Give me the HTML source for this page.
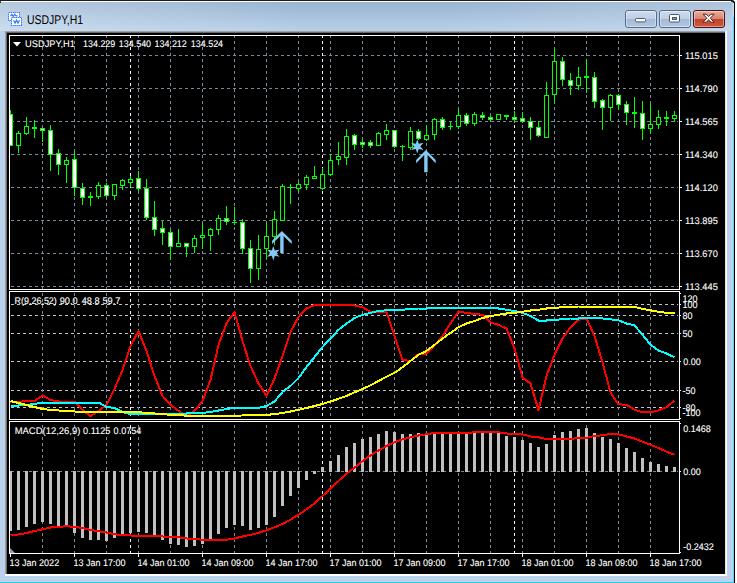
<!DOCTYPE html>
<html><head><meta charset="utf-8"><title>USDJPY,H1</title>
<style>html,body{margin:0;padding:0;background:#fff;overflow:hidden}svg{display:block}text{font-family:"Liberation Sans",sans-serif;shape-rendering:auto;text-rendering:geometricPrecision}</style>
</head><body>
<svg width="737" height="583" viewBox="0 0 737 583" font-family="'Liberation Sans', sans-serif" shape-rendering="crispEdges">
<defs><linearGradient id="tg" x1="0" y1="0" x2="0" y2="1"><stop offset="0" stop-color="#99b4d1"/><stop offset="1" stop-color="#b9d1ea"/></linearGradient><linearGradient id="bt" x1="0" y1="0" x2="0" y2="1"><stop offset="0" stop-color="#cfdcee"/><stop offset="0.48" stop-color="#bccfe6"/><stop offset="0.5" stop-color="#a2b9d6"/><stop offset="1" stop-color="#b3c8e2"/></linearGradient><linearGradient id="bc" x1="0" y1="0" x2="0" y2="1"><stop offset="0" stop-color="#eeb0a0"/><stop offset="0.48" stop-color="#d98370"/><stop offset="0.5" stop-color="#c2412a"/><stop offset="1" stop-color="#cf5a3c"/></linearGradient><linearGradient id="hg" x1="0" y1="0" x2="1" y2="0"><stop offset="0" stop-color="#fff" stop-opacity="0.28"/><stop offset="0.42" stop-color="#fff" stop-opacity="0"/><stop offset="0.6" stop-color="#fff" stop-opacity="0"/><stop offset="1" stop-color="#fff" stop-opacity="0.2"/></linearGradient></defs>
<rect x="0" y="0" width="737" height="583" fill="#ffffff"/>
<rect x="0" y="0" width="735" height="583" fill="#b9d1ea"/>
<rect x="0" y="2" width="734" height="30" fill="url(#tg)"/>
<rect x="0" y="2" width="732" height="29" fill="url(#hg)"/>
<rect x="0" y="0" width="733" height="1" fill="#1c1c1c"/>
<rect x="733" y="0" width="4" height="2" fill="#ffffff"/>
<rect x="733" y="0" width="1" height="1" fill="#777777"/>
<rect x="0" y="1" width="731" height="1" fill="#ffffff"/>
<rect x="731" y="1" width="2" height="1" fill="#1d3a44"/>
<rect x="733" y="1" width="1" height="1" fill="#000000"/>
<rect x="734" y="1" width="1" height="1" fill="#888888"/>
<rect x="732" y="3" width="1" height="579" fill="#c5cfe8"/>
<rect x="0" y="581" width="733" height="1" fill="#c5cfe8"/>
<rect x="733" y="3" width="1" height="580" fill="#55d5fb"/>
<rect x="733" y="3" width="1" height="14" fill="#a8e6fb"/>
<rect x="733" y="2" width="1" height="1" fill="#1d3a44"/>
<rect x="734" y="2" width="1" height="581" fill="#000000"/>
<rect x="0" y="582" width="734" height="1" fill="#22cfe8"/>
<rect x="0" y="1" width="1" height="2" fill="#3a3a3a"/>
<rect x="5" y="31" width="722" height="545" fill="#ffffff"/>
<rect x="5" y="31" width="721" height="544" fill="#a0a0a0"/>
<rect x="6" y="32" width="720" height="543" fill="#696969"/>
<rect x="7" y="33" width="718" height="541" fill="#000000"/>
<rect x="725" y="31" width="1" height="545" fill="#e3e3e3"/>
<rect x="726" y="31" width="1" height="545" fill="#ffffff"/>
<rect x="5" y="574" width="722" height="2" fill="#ffffff"/>
<g shape-rendering="crispEdges" fill="#ffffff">
<rect x="8.5" y="12.5" width="11" height="8" stroke="#8db6ff"/>
<rect x="8.5" y="12.5" width="11" height="8" fill="none" stroke="#3f7df7" stroke-dasharray="1 1"/>
<path d="M10.5 16l1.3-1.6l1.4 2l1.5-2.2l1.3 1.6h1.6" stroke="#3575f2" fill="none" shape-rendering="auto" stroke-width="1.2"/>
<rect x="11.5" y="17.5" width="10" height="8" stroke="#8db6ff"/>
<rect x="11.5" y="17.5" width="10" height="8" fill="none" stroke="#3f7df7" stroke-dasharray="1 1"/>
<path d="M13.6 20.2l1.4 3l1.5-3l1.5 3l1.5-3" stroke="#3575f2" fill="none" shape-rendering="auto" stroke-width="1.2"/>
</g>
<text x="27" y="24" font-size="12.8" fill="#000" textLength="56" lengthAdjust="spacingAndGlyphs" shape-rendering="auto">USDJPY,H1</text>
<rect x="625.5" y="10.5" width="31" height="17" rx="2.5" ry="2.5" fill="url(#bt)" stroke="#566c8a" shape-rendering="auto"/>
<rect x="626.5" y="11.5" width="29" height="15" rx="1.5" ry="1.5" fill="none" stroke="#ffffff" stroke-opacity="0.4" shape-rendering="auto"/>
<rect x="659.5" y="10.5" width="31" height="17" rx="2.5" ry="2.5" fill="url(#bt)" stroke="#566c8a" shape-rendering="auto"/>
<rect x="660.5" y="11.5" width="29" height="15" rx="1.5" ry="1.5" fill="none" stroke="#ffffff" stroke-opacity="0.4" shape-rendering="auto"/>
<rect x="693.5" y="10.5" width="31" height="17" rx="2.5" ry="2.5" fill="url(#bc)" stroke="#431320" shape-rendering="auto"/>
<rect x="694.5" y="11.5" width="29" height="15" rx="1.5" ry="1.5" fill="none" stroke="#ffffff" stroke-opacity="0.4" shape-rendering="auto"/>
<rect x="635.5" y="18.5" width="10" height="3.4" rx="1" fill="#fff" stroke="#4a5872" shape-rendering="auto"/>
<rect x="669.5" y="14.5" width="10" height="7.5" rx="1" fill="#fff" stroke="#4a5872" shape-rendering="auto"/>
<rect x="672.5" y="17.5" width="4" height="2" fill="#7f9cc4" stroke="#4a5872" shape-rendering="auto"/>
<polygon points="703.0,14.2 706.2,14.2 708.6,16.5 711.0,14.2 714.2,14.2 710.3,18.2 714.2,22.2 711.0,22.2 708.6,19.9 706.2,22.2 703.0,22.2 706.9,18.2" fill="#fff" stroke="#4d2323" stroke-width="1" stroke-linejoin="round" shape-rendering="auto"/>
<path d="M11 55h3v1h-3zM17 55h3v1h-3zM23 55h3v1h-3zM29 55h3v1h-3zM35 55h3v1h-3zM41 55h3v1h-3zM47 55h3v1h-3zM53 55h3v1h-3zM59 55h3v1h-3zM65 55h3v1h-3zM71 55h3v1h-3zM77 55h3v1h-3zM83 55h3v1h-3zM89 55h3v1h-3zM95 55h3v1h-3zM101 55h3v1h-3zM107 55h3v1h-3zM113 55h3v1h-3zM119 55h3v1h-3zM125 55h3v1h-3zM131 55h3v1h-3zM137 55h3v1h-3zM143 55h3v1h-3zM149 55h3v1h-3zM155 55h3v1h-3zM161 55h3v1h-3zM167 55h3v1h-3zM173 55h3v1h-3zM179 55h3v1h-3zM185 55h3v1h-3zM191 55h3v1h-3zM197 55h3v1h-3zM203 55h3v1h-3zM209 55h3v1h-3zM215 55h3v1h-3zM221 55h3v1h-3zM227 55h3v1h-3zM233 55h3v1h-3zM239 55h3v1h-3zM245 55h3v1h-3zM251 55h3v1h-3zM257 55h3v1h-3zM263 55h3v1h-3zM269 55h3v1h-3zM275 55h3v1h-3zM281 55h3v1h-3zM287 55h3v1h-3zM293 55h3v1h-3zM299 55h3v1h-3zM305 55h3v1h-3zM311 55h3v1h-3zM317 55h3v1h-3zM323 55h3v1h-3zM329 55h3v1h-3zM335 55h3v1h-3zM341 55h3v1h-3zM347 55h3v1h-3zM353 55h3v1h-3zM359 55h3v1h-3zM365 55h3v1h-3zM371 55h3v1h-3zM377 55h3v1h-3zM383 55h3v1h-3zM389 55h3v1h-3zM395 55h3v1h-3zM401 55h3v1h-3zM407 55h3v1h-3zM413 55h3v1h-3zM419 55h3v1h-3zM425 55h3v1h-3zM431 55h3v1h-3zM437 55h3v1h-3zM443 55h3v1h-3zM449 55h3v1h-3zM455 55h3v1h-3zM461 55h3v1h-3zM467 55h3v1h-3zM473 55h3v1h-3zM479 55h3v1h-3zM485 55h3v1h-3zM491 55h3v1h-3zM497 55h3v1h-3zM503 55h3v1h-3zM509 55h3v1h-3zM515 55h3v1h-3zM521 55h3v1h-3zM527 55h3v1h-3zM533 55h3v1h-3zM539 55h3v1h-3zM545 55h3v1h-3zM551 55h3v1h-3zM557 55h3v1h-3zM563 55h3v1h-3zM569 55h3v1h-3zM575 55h3v1h-3zM581 55h3v1h-3zM587 55h3v1h-3zM593 55h3v1h-3zM599 55h3v1h-3zM605 55h3v1h-3zM611 55h3v1h-3zM617 55h3v1h-3zM623 55h3v1h-3zM629 55h3v1h-3zM635 55h3v1h-3zM641 55h3v1h-3zM647 55h3v1h-3zM653 55h3v1h-3zM659 55h3v1h-3zM665 55h3v1h-3zM671 55h3v1h-3zM677 55h1v1h-1z" fill="#778899"/>
<path d="M11 88h3v1h-3zM17 88h3v1h-3zM23 88h3v1h-3zM29 88h3v1h-3zM35 88h3v1h-3zM41 88h3v1h-3zM47 88h3v1h-3zM53 88h3v1h-3zM59 88h3v1h-3zM65 88h3v1h-3zM71 88h3v1h-3zM77 88h3v1h-3zM83 88h3v1h-3zM89 88h3v1h-3zM95 88h3v1h-3zM101 88h3v1h-3zM107 88h3v1h-3zM113 88h3v1h-3zM119 88h3v1h-3zM125 88h3v1h-3zM131 88h3v1h-3zM137 88h3v1h-3zM143 88h3v1h-3zM149 88h3v1h-3zM155 88h3v1h-3zM161 88h3v1h-3zM167 88h3v1h-3zM173 88h3v1h-3zM179 88h3v1h-3zM185 88h3v1h-3zM191 88h3v1h-3zM197 88h3v1h-3zM203 88h3v1h-3zM209 88h3v1h-3zM215 88h3v1h-3zM221 88h3v1h-3zM227 88h3v1h-3zM233 88h3v1h-3zM239 88h3v1h-3zM245 88h3v1h-3zM251 88h3v1h-3zM257 88h3v1h-3zM263 88h3v1h-3zM269 88h3v1h-3zM275 88h3v1h-3zM281 88h3v1h-3zM287 88h3v1h-3zM293 88h3v1h-3zM299 88h3v1h-3zM305 88h3v1h-3zM311 88h3v1h-3zM317 88h3v1h-3zM323 88h3v1h-3zM329 88h3v1h-3zM335 88h3v1h-3zM341 88h3v1h-3zM347 88h3v1h-3zM353 88h3v1h-3zM359 88h3v1h-3zM365 88h3v1h-3zM371 88h3v1h-3zM377 88h3v1h-3zM383 88h3v1h-3zM389 88h3v1h-3zM395 88h3v1h-3zM401 88h3v1h-3zM407 88h3v1h-3zM413 88h3v1h-3zM419 88h3v1h-3zM425 88h3v1h-3zM431 88h3v1h-3zM437 88h3v1h-3zM443 88h3v1h-3zM449 88h3v1h-3zM455 88h3v1h-3zM461 88h3v1h-3zM467 88h3v1h-3zM473 88h3v1h-3zM479 88h3v1h-3zM485 88h3v1h-3zM491 88h3v1h-3zM497 88h3v1h-3zM503 88h3v1h-3zM509 88h3v1h-3zM515 88h3v1h-3zM521 88h3v1h-3zM527 88h3v1h-3zM533 88h3v1h-3zM539 88h3v1h-3zM545 88h3v1h-3zM551 88h3v1h-3zM557 88h3v1h-3zM563 88h3v1h-3zM569 88h3v1h-3zM575 88h3v1h-3zM581 88h3v1h-3zM587 88h3v1h-3zM593 88h3v1h-3zM599 88h3v1h-3zM605 88h3v1h-3zM611 88h3v1h-3zM617 88h3v1h-3zM623 88h3v1h-3zM629 88h3v1h-3zM635 88h3v1h-3zM641 88h3v1h-3zM647 88h3v1h-3zM653 88h3v1h-3zM659 88h3v1h-3zM665 88h3v1h-3zM671 88h3v1h-3zM677 88h1v1h-1z" fill="#778899"/>
<path d="M11 121h3v1h-3zM17 121h3v1h-3zM23 121h3v1h-3zM29 121h3v1h-3zM35 121h3v1h-3zM41 121h3v1h-3zM47 121h3v1h-3zM53 121h3v1h-3zM59 121h3v1h-3zM65 121h3v1h-3zM71 121h3v1h-3zM77 121h3v1h-3zM83 121h3v1h-3zM89 121h3v1h-3zM95 121h3v1h-3zM101 121h3v1h-3zM107 121h3v1h-3zM113 121h3v1h-3zM119 121h3v1h-3zM125 121h3v1h-3zM131 121h3v1h-3zM137 121h3v1h-3zM143 121h3v1h-3zM149 121h3v1h-3zM155 121h3v1h-3zM161 121h3v1h-3zM167 121h3v1h-3zM173 121h3v1h-3zM179 121h3v1h-3zM185 121h3v1h-3zM191 121h3v1h-3zM197 121h3v1h-3zM203 121h3v1h-3zM209 121h3v1h-3zM215 121h3v1h-3zM221 121h3v1h-3zM227 121h3v1h-3zM233 121h3v1h-3zM239 121h3v1h-3zM245 121h3v1h-3zM251 121h3v1h-3zM257 121h3v1h-3zM263 121h3v1h-3zM269 121h3v1h-3zM275 121h3v1h-3zM281 121h3v1h-3zM287 121h3v1h-3zM293 121h3v1h-3zM299 121h3v1h-3zM305 121h3v1h-3zM311 121h3v1h-3zM317 121h3v1h-3zM323 121h3v1h-3zM329 121h3v1h-3zM335 121h3v1h-3zM341 121h3v1h-3zM347 121h3v1h-3zM353 121h3v1h-3zM359 121h3v1h-3zM365 121h3v1h-3zM371 121h3v1h-3zM377 121h3v1h-3zM383 121h3v1h-3zM389 121h3v1h-3zM395 121h3v1h-3zM401 121h3v1h-3zM407 121h3v1h-3zM413 121h3v1h-3zM419 121h3v1h-3zM425 121h3v1h-3zM431 121h3v1h-3zM437 121h3v1h-3zM443 121h3v1h-3zM449 121h3v1h-3zM455 121h3v1h-3zM461 121h3v1h-3zM467 121h3v1h-3zM473 121h3v1h-3zM479 121h3v1h-3zM485 121h3v1h-3zM491 121h3v1h-3zM497 121h3v1h-3zM503 121h3v1h-3zM509 121h3v1h-3zM515 121h3v1h-3zM521 121h3v1h-3zM527 121h3v1h-3zM533 121h3v1h-3zM539 121h3v1h-3zM545 121h3v1h-3zM551 121h3v1h-3zM557 121h3v1h-3zM563 121h3v1h-3zM569 121h3v1h-3zM575 121h3v1h-3zM581 121h3v1h-3zM587 121h3v1h-3zM593 121h3v1h-3zM599 121h3v1h-3zM605 121h3v1h-3zM611 121h3v1h-3zM617 121h3v1h-3zM623 121h3v1h-3zM629 121h3v1h-3zM635 121h3v1h-3zM641 121h3v1h-3zM647 121h3v1h-3zM653 121h3v1h-3zM659 121h3v1h-3zM665 121h3v1h-3zM671 121h3v1h-3zM677 121h1v1h-1z" fill="#778899"/>
<path d="M11 154h3v1h-3zM17 154h3v1h-3zM23 154h3v1h-3zM29 154h3v1h-3zM35 154h3v1h-3zM41 154h3v1h-3zM47 154h3v1h-3zM53 154h3v1h-3zM59 154h3v1h-3zM65 154h3v1h-3zM71 154h3v1h-3zM77 154h3v1h-3zM83 154h3v1h-3zM89 154h3v1h-3zM95 154h3v1h-3zM101 154h3v1h-3zM107 154h3v1h-3zM113 154h3v1h-3zM119 154h3v1h-3zM125 154h3v1h-3zM131 154h3v1h-3zM137 154h3v1h-3zM143 154h3v1h-3zM149 154h3v1h-3zM155 154h3v1h-3zM161 154h3v1h-3zM167 154h3v1h-3zM173 154h3v1h-3zM179 154h3v1h-3zM185 154h3v1h-3zM191 154h3v1h-3zM197 154h3v1h-3zM203 154h3v1h-3zM209 154h3v1h-3zM215 154h3v1h-3zM221 154h3v1h-3zM227 154h3v1h-3zM233 154h3v1h-3zM239 154h3v1h-3zM245 154h3v1h-3zM251 154h3v1h-3zM257 154h3v1h-3zM263 154h3v1h-3zM269 154h3v1h-3zM275 154h3v1h-3zM281 154h3v1h-3zM287 154h3v1h-3zM293 154h3v1h-3zM299 154h3v1h-3zM305 154h3v1h-3zM311 154h3v1h-3zM317 154h3v1h-3zM323 154h3v1h-3zM329 154h3v1h-3zM335 154h3v1h-3zM341 154h3v1h-3zM347 154h3v1h-3zM353 154h3v1h-3zM359 154h3v1h-3zM365 154h3v1h-3zM371 154h3v1h-3zM377 154h3v1h-3zM383 154h3v1h-3zM389 154h3v1h-3zM395 154h3v1h-3zM401 154h3v1h-3zM407 154h3v1h-3zM413 154h3v1h-3zM419 154h3v1h-3zM425 154h3v1h-3zM431 154h3v1h-3zM437 154h3v1h-3zM443 154h3v1h-3zM449 154h3v1h-3zM455 154h3v1h-3zM461 154h3v1h-3zM467 154h3v1h-3zM473 154h3v1h-3zM479 154h3v1h-3zM485 154h3v1h-3zM491 154h3v1h-3zM497 154h3v1h-3zM503 154h3v1h-3zM509 154h3v1h-3zM515 154h3v1h-3zM521 154h3v1h-3zM527 154h3v1h-3zM533 154h3v1h-3zM539 154h3v1h-3zM545 154h3v1h-3zM551 154h3v1h-3zM557 154h3v1h-3zM563 154h3v1h-3zM569 154h3v1h-3zM575 154h3v1h-3zM581 154h3v1h-3zM587 154h3v1h-3zM593 154h3v1h-3zM599 154h3v1h-3zM605 154h3v1h-3zM611 154h3v1h-3zM617 154h3v1h-3zM623 154h3v1h-3zM629 154h3v1h-3zM635 154h3v1h-3zM641 154h3v1h-3zM647 154h3v1h-3zM653 154h3v1h-3zM659 154h3v1h-3zM665 154h3v1h-3zM671 154h3v1h-3zM677 154h1v1h-1z" fill="#778899"/>
<path d="M11 187h3v1h-3zM17 187h3v1h-3zM23 187h3v1h-3zM29 187h3v1h-3zM35 187h3v1h-3zM41 187h3v1h-3zM47 187h3v1h-3zM53 187h3v1h-3zM59 187h3v1h-3zM65 187h3v1h-3zM71 187h3v1h-3zM77 187h3v1h-3zM83 187h3v1h-3zM89 187h3v1h-3zM95 187h3v1h-3zM101 187h3v1h-3zM107 187h3v1h-3zM113 187h3v1h-3zM119 187h3v1h-3zM125 187h3v1h-3zM131 187h3v1h-3zM137 187h3v1h-3zM143 187h3v1h-3zM149 187h3v1h-3zM155 187h3v1h-3zM161 187h3v1h-3zM167 187h3v1h-3zM173 187h3v1h-3zM179 187h3v1h-3zM185 187h3v1h-3zM191 187h3v1h-3zM197 187h3v1h-3zM203 187h3v1h-3zM209 187h3v1h-3zM215 187h3v1h-3zM221 187h3v1h-3zM227 187h3v1h-3zM233 187h3v1h-3zM239 187h3v1h-3zM245 187h3v1h-3zM251 187h3v1h-3zM257 187h3v1h-3zM263 187h3v1h-3zM269 187h3v1h-3zM275 187h3v1h-3zM281 187h3v1h-3zM287 187h3v1h-3zM293 187h3v1h-3zM299 187h3v1h-3zM305 187h3v1h-3zM311 187h3v1h-3zM317 187h3v1h-3zM323 187h3v1h-3zM329 187h3v1h-3zM335 187h3v1h-3zM341 187h3v1h-3zM347 187h3v1h-3zM353 187h3v1h-3zM359 187h3v1h-3zM365 187h3v1h-3zM371 187h3v1h-3zM377 187h3v1h-3zM383 187h3v1h-3zM389 187h3v1h-3zM395 187h3v1h-3zM401 187h3v1h-3zM407 187h3v1h-3zM413 187h3v1h-3zM419 187h3v1h-3zM425 187h3v1h-3zM431 187h3v1h-3zM437 187h3v1h-3zM443 187h3v1h-3zM449 187h3v1h-3zM455 187h3v1h-3zM461 187h3v1h-3zM467 187h3v1h-3zM473 187h3v1h-3zM479 187h3v1h-3zM485 187h3v1h-3zM491 187h3v1h-3zM497 187h3v1h-3zM503 187h3v1h-3zM509 187h3v1h-3zM515 187h3v1h-3zM521 187h3v1h-3zM527 187h3v1h-3zM533 187h3v1h-3zM539 187h3v1h-3zM545 187h3v1h-3zM551 187h3v1h-3zM557 187h3v1h-3zM563 187h3v1h-3zM569 187h3v1h-3zM575 187h3v1h-3zM581 187h3v1h-3zM587 187h3v1h-3zM593 187h3v1h-3zM599 187h3v1h-3zM605 187h3v1h-3zM611 187h3v1h-3zM617 187h3v1h-3zM623 187h3v1h-3zM629 187h3v1h-3zM635 187h3v1h-3zM641 187h3v1h-3zM647 187h3v1h-3zM653 187h3v1h-3zM659 187h3v1h-3zM665 187h3v1h-3zM671 187h3v1h-3zM677 187h1v1h-1z" fill="#778899"/>
<path d="M11 220h3v1h-3zM17 220h3v1h-3zM23 220h3v1h-3zM29 220h3v1h-3zM35 220h3v1h-3zM41 220h3v1h-3zM47 220h3v1h-3zM53 220h3v1h-3zM59 220h3v1h-3zM65 220h3v1h-3zM71 220h3v1h-3zM77 220h3v1h-3zM83 220h3v1h-3zM89 220h3v1h-3zM95 220h3v1h-3zM101 220h3v1h-3zM107 220h3v1h-3zM113 220h3v1h-3zM119 220h3v1h-3zM125 220h3v1h-3zM131 220h3v1h-3zM137 220h3v1h-3zM143 220h3v1h-3zM149 220h3v1h-3zM155 220h3v1h-3zM161 220h3v1h-3zM167 220h3v1h-3zM173 220h3v1h-3zM179 220h3v1h-3zM185 220h3v1h-3zM191 220h3v1h-3zM197 220h3v1h-3zM203 220h3v1h-3zM209 220h3v1h-3zM215 220h3v1h-3zM221 220h3v1h-3zM227 220h3v1h-3zM233 220h3v1h-3zM239 220h3v1h-3zM245 220h3v1h-3zM251 220h3v1h-3zM257 220h3v1h-3zM263 220h3v1h-3zM269 220h3v1h-3zM275 220h3v1h-3zM281 220h3v1h-3zM287 220h3v1h-3zM293 220h3v1h-3zM299 220h3v1h-3zM305 220h3v1h-3zM311 220h3v1h-3zM317 220h3v1h-3zM323 220h3v1h-3zM329 220h3v1h-3zM335 220h3v1h-3zM341 220h3v1h-3zM347 220h3v1h-3zM353 220h3v1h-3zM359 220h3v1h-3zM365 220h3v1h-3zM371 220h3v1h-3zM377 220h3v1h-3zM383 220h3v1h-3zM389 220h3v1h-3zM395 220h3v1h-3zM401 220h3v1h-3zM407 220h3v1h-3zM413 220h3v1h-3zM419 220h3v1h-3zM425 220h3v1h-3zM431 220h3v1h-3zM437 220h3v1h-3zM443 220h3v1h-3zM449 220h3v1h-3zM455 220h3v1h-3zM461 220h3v1h-3zM467 220h3v1h-3zM473 220h3v1h-3zM479 220h3v1h-3zM485 220h3v1h-3zM491 220h3v1h-3zM497 220h3v1h-3zM503 220h3v1h-3zM509 220h3v1h-3zM515 220h3v1h-3zM521 220h3v1h-3zM527 220h3v1h-3zM533 220h3v1h-3zM539 220h3v1h-3zM545 220h3v1h-3zM551 220h3v1h-3zM557 220h3v1h-3zM563 220h3v1h-3zM569 220h3v1h-3zM575 220h3v1h-3zM581 220h3v1h-3zM587 220h3v1h-3zM593 220h3v1h-3zM599 220h3v1h-3zM605 220h3v1h-3zM611 220h3v1h-3zM617 220h3v1h-3zM623 220h3v1h-3zM629 220h3v1h-3zM635 220h3v1h-3zM641 220h3v1h-3zM647 220h3v1h-3zM653 220h3v1h-3zM659 220h3v1h-3zM665 220h3v1h-3zM671 220h3v1h-3zM677 220h1v1h-1z" fill="#778899"/>
<path d="M11 253h3v1h-3zM17 253h3v1h-3zM23 253h3v1h-3zM29 253h3v1h-3zM35 253h3v1h-3zM41 253h3v1h-3zM47 253h3v1h-3zM53 253h3v1h-3zM59 253h3v1h-3zM65 253h3v1h-3zM71 253h3v1h-3zM77 253h3v1h-3zM83 253h3v1h-3zM89 253h3v1h-3zM95 253h3v1h-3zM101 253h3v1h-3zM107 253h3v1h-3zM113 253h3v1h-3zM119 253h3v1h-3zM125 253h3v1h-3zM131 253h3v1h-3zM137 253h3v1h-3zM143 253h3v1h-3zM149 253h3v1h-3zM155 253h3v1h-3zM161 253h3v1h-3zM167 253h3v1h-3zM173 253h3v1h-3zM179 253h3v1h-3zM185 253h3v1h-3zM191 253h3v1h-3zM197 253h3v1h-3zM203 253h3v1h-3zM209 253h3v1h-3zM215 253h3v1h-3zM221 253h3v1h-3zM227 253h3v1h-3zM233 253h3v1h-3zM239 253h3v1h-3zM245 253h3v1h-3zM251 253h3v1h-3zM257 253h3v1h-3zM263 253h3v1h-3zM269 253h3v1h-3zM275 253h3v1h-3zM281 253h3v1h-3zM287 253h3v1h-3zM293 253h3v1h-3zM299 253h3v1h-3zM305 253h3v1h-3zM311 253h3v1h-3zM317 253h3v1h-3zM323 253h3v1h-3zM329 253h3v1h-3zM335 253h3v1h-3zM341 253h3v1h-3zM347 253h3v1h-3zM353 253h3v1h-3zM359 253h3v1h-3zM365 253h3v1h-3zM371 253h3v1h-3zM377 253h3v1h-3zM383 253h3v1h-3zM389 253h3v1h-3zM395 253h3v1h-3zM401 253h3v1h-3zM407 253h3v1h-3zM413 253h3v1h-3zM419 253h3v1h-3zM425 253h3v1h-3zM431 253h3v1h-3zM437 253h3v1h-3zM443 253h3v1h-3zM449 253h3v1h-3zM455 253h3v1h-3zM461 253h3v1h-3zM467 253h3v1h-3zM473 253h3v1h-3zM479 253h3v1h-3zM485 253h3v1h-3zM491 253h3v1h-3zM497 253h3v1h-3zM503 253h3v1h-3zM509 253h3v1h-3zM515 253h3v1h-3zM521 253h3v1h-3zM527 253h3v1h-3zM533 253h3v1h-3zM539 253h3v1h-3zM545 253h3v1h-3zM551 253h3v1h-3zM557 253h3v1h-3zM563 253h3v1h-3zM569 253h3v1h-3zM575 253h3v1h-3zM581 253h3v1h-3zM587 253h3v1h-3zM593 253h3v1h-3zM599 253h3v1h-3zM605 253h3v1h-3zM611 253h3v1h-3zM617 253h3v1h-3zM623 253h3v1h-3zM629 253h3v1h-3zM635 253h3v1h-3zM641 253h3v1h-3zM647 253h3v1h-3zM653 253h3v1h-3zM659 253h3v1h-3zM665 253h3v1h-3zM671 253h3v1h-3zM677 253h1v1h-1z" fill="#778899"/>
<path d="M11 286h3v1h-3zM17 286h3v1h-3zM23 286h3v1h-3zM29 286h3v1h-3zM35 286h3v1h-3zM41 286h3v1h-3zM47 286h3v1h-3zM53 286h3v1h-3zM59 286h3v1h-3zM65 286h3v1h-3zM71 286h3v1h-3zM77 286h3v1h-3zM83 286h3v1h-3zM89 286h3v1h-3zM95 286h3v1h-3zM101 286h3v1h-3zM107 286h3v1h-3zM113 286h3v1h-3zM119 286h3v1h-3zM125 286h3v1h-3zM131 286h3v1h-3zM137 286h3v1h-3zM143 286h3v1h-3zM149 286h3v1h-3zM155 286h3v1h-3zM161 286h3v1h-3zM167 286h3v1h-3zM173 286h3v1h-3zM179 286h3v1h-3zM185 286h3v1h-3zM191 286h3v1h-3zM197 286h3v1h-3zM203 286h3v1h-3zM209 286h3v1h-3zM215 286h3v1h-3zM221 286h3v1h-3zM227 286h3v1h-3zM233 286h3v1h-3zM239 286h3v1h-3zM245 286h3v1h-3zM251 286h3v1h-3zM257 286h3v1h-3zM263 286h3v1h-3zM269 286h3v1h-3zM275 286h3v1h-3zM281 286h3v1h-3zM287 286h3v1h-3zM293 286h3v1h-3zM299 286h3v1h-3zM305 286h3v1h-3zM311 286h3v1h-3zM317 286h3v1h-3zM323 286h3v1h-3zM329 286h3v1h-3zM335 286h3v1h-3zM341 286h3v1h-3zM347 286h3v1h-3zM353 286h3v1h-3zM359 286h3v1h-3zM365 286h3v1h-3zM371 286h3v1h-3zM377 286h3v1h-3zM383 286h3v1h-3zM389 286h3v1h-3zM395 286h3v1h-3zM401 286h3v1h-3zM407 286h3v1h-3zM413 286h3v1h-3zM419 286h3v1h-3zM425 286h3v1h-3zM431 286h3v1h-3zM437 286h3v1h-3zM443 286h3v1h-3zM449 286h3v1h-3zM455 286h3v1h-3zM461 286h3v1h-3zM467 286h3v1h-3zM473 286h3v1h-3zM479 286h3v1h-3zM485 286h3v1h-3zM491 286h3v1h-3zM497 286h3v1h-3zM503 286h3v1h-3zM509 286h3v1h-3zM515 286h3v1h-3zM521 286h3v1h-3zM527 286h3v1h-3zM533 286h3v1h-3zM539 286h3v1h-3zM545 286h3v1h-3zM551 286h3v1h-3zM557 286h3v1h-3zM563 286h3v1h-3zM569 286h3v1h-3zM575 286h3v1h-3zM581 286h3v1h-3zM587 286h3v1h-3zM593 286h3v1h-3zM599 286h3v1h-3zM605 286h3v1h-3zM611 286h3v1h-3zM617 286h3v1h-3zM623 286h3v1h-3zM629 286h3v1h-3zM635 286h3v1h-3zM641 286h3v1h-3zM647 286h3v1h-3zM653 286h3v1h-3zM659 286h3v1h-3zM665 286h3v1h-3zM671 286h3v1h-3zM677 286h1v1h-1z" fill="#778899"/>
<path d="M42 36v2h1v-2zM42 41v3h1v-3zM42 47v3h1v-3zM42 53v3h1v-3zM42 59v3h1v-3zM42 65v3h1v-3zM42 71v3h1v-3zM42 77v3h1v-3zM42 83v3h1v-3zM42 89v3h1v-3zM42 95v3h1v-3zM42 101v3h1v-3zM42 107v3h1v-3zM42 113v3h1v-3zM42 119v3h1v-3zM42 125v3h1v-3zM42 131v3h1v-3zM42 137v3h1v-3zM42 143v3h1v-3zM42 149v3h1v-3zM42 155v3h1v-3zM42 161v3h1v-3zM42 167v3h1v-3zM42 173v3h1v-3zM42 179v3h1v-3zM42 185v3h1v-3zM42 191v3h1v-3zM42 197v3h1v-3zM42 203v3h1v-3zM42 209v3h1v-3zM42 215v3h1v-3zM42 221v3h1v-3zM42 227v3h1v-3zM42 233v3h1v-3zM42 239v3h1v-3zM42 245v3h1v-3zM42 251v3h1v-3zM42 257v3h1v-3zM42 263v3h1v-3zM42 269v3h1v-3zM42 275v3h1v-3zM42 281v3h1v-3zM42 287v2h1v-2z" fill="#778899"/>
<path d="M74 36v2h1v-2zM74 41v3h1v-3zM74 47v3h1v-3zM74 53v3h1v-3zM74 59v3h1v-3zM74 65v3h1v-3zM74 71v3h1v-3zM74 77v3h1v-3zM74 83v3h1v-3zM74 89v3h1v-3zM74 95v3h1v-3zM74 101v3h1v-3zM74 107v3h1v-3zM74 113v3h1v-3zM74 119v3h1v-3zM74 125v3h1v-3zM74 131v3h1v-3zM74 137v3h1v-3zM74 143v3h1v-3zM74 149v3h1v-3zM74 155v3h1v-3zM74 161v3h1v-3zM74 167v3h1v-3zM74 173v3h1v-3zM74 179v3h1v-3zM74 185v3h1v-3zM74 191v3h1v-3zM74 197v3h1v-3zM74 203v3h1v-3zM74 209v3h1v-3zM74 215v3h1v-3zM74 221v3h1v-3zM74 227v3h1v-3zM74 233v3h1v-3zM74 239v3h1v-3zM74 245v3h1v-3zM74 251v3h1v-3zM74 257v3h1v-3zM74 263v3h1v-3zM74 269v3h1v-3zM74 275v3h1v-3zM74 281v3h1v-3zM74 287v2h1v-2z" fill="#778899"/>
<path d="M106 36v2h1v-2zM106 41v3h1v-3zM106 47v3h1v-3zM106 53v3h1v-3zM106 59v3h1v-3zM106 65v3h1v-3zM106 71v3h1v-3zM106 77v3h1v-3zM106 83v3h1v-3zM106 89v3h1v-3zM106 95v3h1v-3zM106 101v3h1v-3zM106 107v3h1v-3zM106 113v3h1v-3zM106 119v3h1v-3zM106 125v3h1v-3zM106 131v3h1v-3zM106 137v3h1v-3zM106 143v3h1v-3zM106 149v3h1v-3zM106 155v3h1v-3zM106 161v3h1v-3zM106 167v3h1v-3zM106 173v3h1v-3zM106 179v3h1v-3zM106 185v3h1v-3zM106 191v3h1v-3zM106 197v3h1v-3zM106 203v3h1v-3zM106 209v3h1v-3zM106 215v3h1v-3zM106 221v3h1v-3zM106 227v3h1v-3zM106 233v3h1v-3zM106 239v3h1v-3zM106 245v3h1v-3zM106 251v3h1v-3zM106 257v3h1v-3zM106 263v3h1v-3zM106 269v3h1v-3zM106 275v3h1v-3zM106 281v3h1v-3zM106 287v2h1v-2z" fill="#778899"/>
<path d="M138 36v2h1v-2zM138 41v3h1v-3zM138 47v3h1v-3zM138 53v3h1v-3zM138 59v3h1v-3zM138 65v3h1v-3zM138 71v3h1v-3zM138 77v3h1v-3zM138 83v3h1v-3zM138 89v3h1v-3zM138 95v3h1v-3zM138 101v3h1v-3zM138 107v3h1v-3zM138 113v3h1v-3zM138 119v3h1v-3zM138 125v3h1v-3zM138 131v3h1v-3zM138 137v3h1v-3zM138 143v3h1v-3zM138 149v3h1v-3zM138 155v3h1v-3zM138 161v3h1v-3zM138 167v3h1v-3zM138 173v3h1v-3zM138 179v3h1v-3zM138 185v3h1v-3zM138 191v3h1v-3zM138 197v3h1v-3zM138 203v3h1v-3zM138 209v3h1v-3zM138 215v3h1v-3zM138 221v3h1v-3zM138 227v3h1v-3zM138 233v3h1v-3zM138 239v3h1v-3zM138 245v3h1v-3zM138 251v3h1v-3zM138 257v3h1v-3zM138 263v3h1v-3zM138 269v3h1v-3zM138 275v3h1v-3zM138 281v3h1v-3zM138 287v2h1v-2z" fill="#778899"/>
<path d="M170 36v2h1v-2zM170 41v3h1v-3zM170 47v3h1v-3zM170 53v3h1v-3zM170 59v3h1v-3zM170 65v3h1v-3zM170 71v3h1v-3zM170 77v3h1v-3zM170 83v3h1v-3zM170 89v3h1v-3zM170 95v3h1v-3zM170 101v3h1v-3zM170 107v3h1v-3zM170 113v3h1v-3zM170 119v3h1v-3zM170 125v3h1v-3zM170 131v3h1v-3zM170 137v3h1v-3zM170 143v3h1v-3zM170 149v3h1v-3zM170 155v3h1v-3zM170 161v3h1v-3zM170 167v3h1v-3zM170 173v3h1v-3zM170 179v3h1v-3zM170 185v3h1v-3zM170 191v3h1v-3zM170 197v3h1v-3zM170 203v3h1v-3zM170 209v3h1v-3zM170 215v3h1v-3zM170 221v3h1v-3zM170 227v3h1v-3zM170 233v3h1v-3zM170 239v3h1v-3zM170 245v3h1v-3zM170 251v3h1v-3zM170 257v3h1v-3zM170 263v3h1v-3zM170 269v3h1v-3zM170 275v3h1v-3zM170 281v3h1v-3zM170 287v2h1v-2z" fill="#778899"/>
<path d="M202 36v2h1v-2zM202 41v3h1v-3zM202 47v3h1v-3zM202 53v3h1v-3zM202 59v3h1v-3zM202 65v3h1v-3zM202 71v3h1v-3zM202 77v3h1v-3zM202 83v3h1v-3zM202 89v3h1v-3zM202 95v3h1v-3zM202 101v3h1v-3zM202 107v3h1v-3zM202 113v3h1v-3zM202 119v3h1v-3zM202 125v3h1v-3zM202 131v3h1v-3zM202 137v3h1v-3zM202 143v3h1v-3zM202 149v3h1v-3zM202 155v3h1v-3zM202 161v3h1v-3zM202 167v3h1v-3zM202 173v3h1v-3zM202 179v3h1v-3zM202 185v3h1v-3zM202 191v3h1v-3zM202 197v3h1v-3zM202 203v3h1v-3zM202 209v3h1v-3zM202 215v3h1v-3zM202 221v3h1v-3zM202 227v3h1v-3zM202 233v3h1v-3zM202 239v3h1v-3zM202 245v3h1v-3zM202 251v3h1v-3zM202 257v3h1v-3zM202 263v3h1v-3zM202 269v3h1v-3zM202 275v3h1v-3zM202 281v3h1v-3zM202 287v2h1v-2z" fill="#778899"/>
<path d="M234 36v2h1v-2zM234 41v3h1v-3zM234 47v3h1v-3zM234 53v3h1v-3zM234 59v3h1v-3zM234 65v3h1v-3zM234 71v3h1v-3zM234 77v3h1v-3zM234 83v3h1v-3zM234 89v3h1v-3zM234 95v3h1v-3zM234 101v3h1v-3zM234 107v3h1v-3zM234 113v3h1v-3zM234 119v3h1v-3zM234 125v3h1v-3zM234 131v3h1v-3zM234 137v3h1v-3zM234 143v3h1v-3zM234 149v3h1v-3zM234 155v3h1v-3zM234 161v3h1v-3zM234 167v3h1v-3zM234 173v3h1v-3zM234 179v3h1v-3zM234 185v3h1v-3zM234 191v3h1v-3zM234 197v3h1v-3zM234 203v3h1v-3zM234 209v3h1v-3zM234 215v3h1v-3zM234 221v3h1v-3zM234 227v3h1v-3zM234 233v3h1v-3zM234 239v3h1v-3zM234 245v3h1v-3zM234 251v3h1v-3zM234 257v3h1v-3zM234 263v3h1v-3zM234 269v3h1v-3zM234 275v3h1v-3zM234 281v3h1v-3zM234 287v2h1v-2z" fill="#778899"/>
<path d="M266 36v2h1v-2zM266 41v3h1v-3zM266 47v3h1v-3zM266 53v3h1v-3zM266 59v3h1v-3zM266 65v3h1v-3zM266 71v3h1v-3zM266 77v3h1v-3zM266 83v3h1v-3zM266 89v3h1v-3zM266 95v3h1v-3zM266 101v3h1v-3zM266 107v3h1v-3zM266 113v3h1v-3zM266 119v3h1v-3zM266 125v3h1v-3zM266 131v3h1v-3zM266 137v3h1v-3zM266 143v3h1v-3zM266 149v3h1v-3zM266 155v3h1v-3zM266 161v3h1v-3zM266 167v3h1v-3zM266 173v3h1v-3zM266 179v3h1v-3zM266 185v3h1v-3zM266 191v3h1v-3zM266 197v3h1v-3zM266 203v3h1v-3zM266 209v3h1v-3zM266 215v3h1v-3zM266 221v3h1v-3zM266 227v3h1v-3zM266 233v3h1v-3zM266 239v3h1v-3zM266 245v3h1v-3zM266 251v3h1v-3zM266 257v3h1v-3zM266 263v3h1v-3zM266 269v3h1v-3zM266 275v3h1v-3zM266 281v3h1v-3zM266 287v2h1v-2z" fill="#778899"/>
<path d="M298 36v2h1v-2zM298 41v3h1v-3zM298 47v3h1v-3zM298 53v3h1v-3zM298 59v3h1v-3zM298 65v3h1v-3zM298 71v3h1v-3zM298 77v3h1v-3zM298 83v3h1v-3zM298 89v3h1v-3zM298 95v3h1v-3zM298 101v3h1v-3zM298 107v3h1v-3zM298 113v3h1v-3zM298 119v3h1v-3zM298 125v3h1v-3zM298 131v3h1v-3zM298 137v3h1v-3zM298 143v3h1v-3zM298 149v3h1v-3zM298 155v3h1v-3zM298 161v3h1v-3zM298 167v3h1v-3zM298 173v3h1v-3zM298 179v3h1v-3zM298 185v3h1v-3zM298 191v3h1v-3zM298 197v3h1v-3zM298 203v3h1v-3zM298 209v3h1v-3zM298 215v3h1v-3zM298 221v3h1v-3zM298 227v3h1v-3zM298 233v3h1v-3zM298 239v3h1v-3zM298 245v3h1v-3zM298 251v3h1v-3zM298 257v3h1v-3zM298 263v3h1v-3zM298 269v3h1v-3zM298 275v3h1v-3zM298 281v3h1v-3zM298 287v2h1v-2z" fill="#778899"/>
<path d="M330 36v2h1v-2zM330 41v3h1v-3zM330 47v3h1v-3zM330 53v3h1v-3zM330 59v3h1v-3zM330 65v3h1v-3zM330 71v3h1v-3zM330 77v3h1v-3zM330 83v3h1v-3zM330 89v3h1v-3zM330 95v3h1v-3zM330 101v3h1v-3zM330 107v3h1v-3zM330 113v3h1v-3zM330 119v3h1v-3zM330 125v3h1v-3zM330 131v3h1v-3zM330 137v3h1v-3zM330 143v3h1v-3zM330 149v3h1v-3zM330 155v3h1v-3zM330 161v3h1v-3zM330 167v3h1v-3zM330 173v3h1v-3zM330 179v3h1v-3zM330 185v3h1v-3zM330 191v3h1v-3zM330 197v3h1v-3zM330 203v3h1v-3zM330 209v3h1v-3zM330 215v3h1v-3zM330 221v3h1v-3zM330 227v3h1v-3zM330 233v3h1v-3zM330 239v3h1v-3zM330 245v3h1v-3zM330 251v3h1v-3zM330 257v3h1v-3zM330 263v3h1v-3zM330 269v3h1v-3zM330 275v3h1v-3zM330 281v3h1v-3zM330 287v2h1v-2z" fill="#778899"/>
<path d="M362 36v2h1v-2zM362 41v3h1v-3zM362 47v3h1v-3zM362 53v3h1v-3zM362 59v3h1v-3zM362 65v3h1v-3zM362 71v3h1v-3zM362 77v3h1v-3zM362 83v3h1v-3zM362 89v3h1v-3zM362 95v3h1v-3zM362 101v3h1v-3zM362 107v3h1v-3zM362 113v3h1v-3zM362 119v3h1v-3zM362 125v3h1v-3zM362 131v3h1v-3zM362 137v3h1v-3zM362 143v3h1v-3zM362 149v3h1v-3zM362 155v3h1v-3zM362 161v3h1v-3zM362 167v3h1v-3zM362 173v3h1v-3zM362 179v3h1v-3zM362 185v3h1v-3zM362 191v3h1v-3zM362 197v3h1v-3zM362 203v3h1v-3zM362 209v3h1v-3zM362 215v3h1v-3zM362 221v3h1v-3zM362 227v3h1v-3zM362 233v3h1v-3zM362 239v3h1v-3zM362 245v3h1v-3zM362 251v3h1v-3zM362 257v3h1v-3zM362 263v3h1v-3zM362 269v3h1v-3zM362 275v3h1v-3zM362 281v3h1v-3zM362 287v2h1v-2z" fill="#778899"/>
<path d="M394 36v2h1v-2zM394 41v3h1v-3zM394 47v3h1v-3zM394 53v3h1v-3zM394 59v3h1v-3zM394 65v3h1v-3zM394 71v3h1v-3zM394 77v3h1v-3zM394 83v3h1v-3zM394 89v3h1v-3zM394 95v3h1v-3zM394 101v3h1v-3zM394 107v3h1v-3zM394 113v3h1v-3zM394 119v3h1v-3zM394 125v3h1v-3zM394 131v3h1v-3zM394 137v3h1v-3zM394 143v3h1v-3zM394 149v3h1v-3zM394 155v3h1v-3zM394 161v3h1v-3zM394 167v3h1v-3zM394 173v3h1v-3zM394 179v3h1v-3zM394 185v3h1v-3zM394 191v3h1v-3zM394 197v3h1v-3zM394 203v3h1v-3zM394 209v3h1v-3zM394 215v3h1v-3zM394 221v3h1v-3zM394 227v3h1v-3zM394 233v3h1v-3zM394 239v3h1v-3zM394 245v3h1v-3zM394 251v3h1v-3zM394 257v3h1v-3zM394 263v3h1v-3zM394 269v3h1v-3zM394 275v3h1v-3zM394 281v3h1v-3zM394 287v2h1v-2z" fill="#778899"/>
<path d="M426 36v2h1v-2zM426 41v3h1v-3zM426 47v3h1v-3zM426 53v3h1v-3zM426 59v3h1v-3zM426 65v3h1v-3zM426 71v3h1v-3zM426 77v3h1v-3zM426 83v3h1v-3zM426 89v3h1v-3zM426 95v3h1v-3zM426 101v3h1v-3zM426 107v3h1v-3zM426 113v3h1v-3zM426 119v3h1v-3zM426 125v3h1v-3zM426 131v3h1v-3zM426 137v3h1v-3zM426 143v3h1v-3zM426 149v3h1v-3zM426 155v3h1v-3zM426 161v3h1v-3zM426 167v3h1v-3zM426 173v3h1v-3zM426 179v3h1v-3zM426 185v3h1v-3zM426 191v3h1v-3zM426 197v3h1v-3zM426 203v3h1v-3zM426 209v3h1v-3zM426 215v3h1v-3zM426 221v3h1v-3zM426 227v3h1v-3zM426 233v3h1v-3zM426 239v3h1v-3zM426 245v3h1v-3zM426 251v3h1v-3zM426 257v3h1v-3zM426 263v3h1v-3zM426 269v3h1v-3zM426 275v3h1v-3zM426 281v3h1v-3zM426 287v2h1v-2z" fill="#778899"/>
<path d="M458 36v2h1v-2zM458 41v3h1v-3zM458 47v3h1v-3zM458 53v3h1v-3zM458 59v3h1v-3zM458 65v3h1v-3zM458 71v3h1v-3zM458 77v3h1v-3zM458 83v3h1v-3zM458 89v3h1v-3zM458 95v3h1v-3zM458 101v3h1v-3zM458 107v3h1v-3zM458 113v3h1v-3zM458 119v3h1v-3zM458 125v3h1v-3zM458 131v3h1v-3zM458 137v3h1v-3zM458 143v3h1v-3zM458 149v3h1v-3zM458 155v3h1v-3zM458 161v3h1v-3zM458 167v3h1v-3zM458 173v3h1v-3zM458 179v3h1v-3zM458 185v3h1v-3zM458 191v3h1v-3zM458 197v3h1v-3zM458 203v3h1v-3zM458 209v3h1v-3zM458 215v3h1v-3zM458 221v3h1v-3zM458 227v3h1v-3zM458 233v3h1v-3zM458 239v3h1v-3zM458 245v3h1v-3zM458 251v3h1v-3zM458 257v3h1v-3zM458 263v3h1v-3zM458 269v3h1v-3zM458 275v3h1v-3zM458 281v3h1v-3zM458 287v2h1v-2z" fill="#778899"/>
<path d="M490 36v2h1v-2zM490 41v3h1v-3zM490 47v3h1v-3zM490 53v3h1v-3zM490 59v3h1v-3zM490 65v3h1v-3zM490 71v3h1v-3zM490 77v3h1v-3zM490 83v3h1v-3zM490 89v3h1v-3zM490 95v3h1v-3zM490 101v3h1v-3zM490 107v3h1v-3zM490 113v3h1v-3zM490 119v3h1v-3zM490 125v3h1v-3zM490 131v3h1v-3zM490 137v3h1v-3zM490 143v3h1v-3zM490 149v3h1v-3zM490 155v3h1v-3zM490 161v3h1v-3zM490 167v3h1v-3zM490 173v3h1v-3zM490 179v3h1v-3zM490 185v3h1v-3zM490 191v3h1v-3zM490 197v3h1v-3zM490 203v3h1v-3zM490 209v3h1v-3zM490 215v3h1v-3zM490 221v3h1v-3zM490 227v3h1v-3zM490 233v3h1v-3zM490 239v3h1v-3zM490 245v3h1v-3zM490 251v3h1v-3zM490 257v3h1v-3zM490 263v3h1v-3zM490 269v3h1v-3zM490 275v3h1v-3zM490 281v3h1v-3zM490 287v2h1v-2z" fill="#778899"/>
<path d="M522 36v2h1v-2zM522 41v3h1v-3zM522 47v3h1v-3zM522 53v3h1v-3zM522 59v3h1v-3zM522 65v3h1v-3zM522 71v3h1v-3zM522 77v3h1v-3zM522 83v3h1v-3zM522 89v3h1v-3zM522 95v3h1v-3zM522 101v3h1v-3zM522 107v3h1v-3zM522 113v3h1v-3zM522 119v3h1v-3zM522 125v3h1v-3zM522 131v3h1v-3zM522 137v3h1v-3zM522 143v3h1v-3zM522 149v3h1v-3zM522 155v3h1v-3zM522 161v3h1v-3zM522 167v3h1v-3zM522 173v3h1v-3zM522 179v3h1v-3zM522 185v3h1v-3zM522 191v3h1v-3zM522 197v3h1v-3zM522 203v3h1v-3zM522 209v3h1v-3zM522 215v3h1v-3zM522 221v3h1v-3zM522 227v3h1v-3zM522 233v3h1v-3zM522 239v3h1v-3zM522 245v3h1v-3zM522 251v3h1v-3zM522 257v3h1v-3zM522 263v3h1v-3zM522 269v3h1v-3zM522 275v3h1v-3zM522 281v3h1v-3zM522 287v2h1v-2z" fill="#778899"/>
<path d="M554 36v2h1v-2zM554 41v3h1v-3zM554 47v3h1v-3zM554 53v3h1v-3zM554 59v3h1v-3zM554 65v3h1v-3zM554 71v3h1v-3zM554 77v3h1v-3zM554 83v3h1v-3zM554 89v3h1v-3zM554 95v3h1v-3zM554 101v3h1v-3zM554 107v3h1v-3zM554 113v3h1v-3zM554 119v3h1v-3zM554 125v3h1v-3zM554 131v3h1v-3zM554 137v3h1v-3zM554 143v3h1v-3zM554 149v3h1v-3zM554 155v3h1v-3zM554 161v3h1v-3zM554 167v3h1v-3zM554 173v3h1v-3zM554 179v3h1v-3zM554 185v3h1v-3zM554 191v3h1v-3zM554 197v3h1v-3zM554 203v3h1v-3zM554 209v3h1v-3zM554 215v3h1v-3zM554 221v3h1v-3zM554 227v3h1v-3zM554 233v3h1v-3zM554 239v3h1v-3zM554 245v3h1v-3zM554 251v3h1v-3zM554 257v3h1v-3zM554 263v3h1v-3zM554 269v3h1v-3zM554 275v3h1v-3zM554 281v3h1v-3zM554 287v2h1v-2z" fill="#778899"/>
<path d="M586 36v2h1v-2zM586 41v3h1v-3zM586 47v3h1v-3zM586 53v3h1v-3zM586 59v3h1v-3zM586 65v3h1v-3zM586 71v3h1v-3zM586 77v3h1v-3zM586 83v3h1v-3zM586 89v3h1v-3zM586 95v3h1v-3zM586 101v3h1v-3zM586 107v3h1v-3zM586 113v3h1v-3zM586 119v3h1v-3zM586 125v3h1v-3zM586 131v3h1v-3zM586 137v3h1v-3zM586 143v3h1v-3zM586 149v3h1v-3zM586 155v3h1v-3zM586 161v3h1v-3zM586 167v3h1v-3zM586 173v3h1v-3zM586 179v3h1v-3zM586 185v3h1v-3zM586 191v3h1v-3zM586 197v3h1v-3zM586 203v3h1v-3zM586 209v3h1v-3zM586 215v3h1v-3zM586 221v3h1v-3zM586 227v3h1v-3zM586 233v3h1v-3zM586 239v3h1v-3zM586 245v3h1v-3zM586 251v3h1v-3zM586 257v3h1v-3zM586 263v3h1v-3zM586 269v3h1v-3zM586 275v3h1v-3zM586 281v3h1v-3zM586 287v2h1v-2z" fill="#778899"/>
<path d="M618 36v2h1v-2zM618 41v3h1v-3zM618 47v3h1v-3zM618 53v3h1v-3zM618 59v3h1v-3zM618 65v3h1v-3zM618 71v3h1v-3zM618 77v3h1v-3zM618 83v3h1v-3zM618 89v3h1v-3zM618 95v3h1v-3zM618 101v3h1v-3zM618 107v3h1v-3zM618 113v3h1v-3zM618 119v3h1v-3zM618 125v3h1v-3zM618 131v3h1v-3zM618 137v3h1v-3zM618 143v3h1v-3zM618 149v3h1v-3zM618 155v3h1v-3zM618 161v3h1v-3zM618 167v3h1v-3zM618 173v3h1v-3zM618 179v3h1v-3zM618 185v3h1v-3zM618 191v3h1v-3zM618 197v3h1v-3zM618 203v3h1v-3zM618 209v3h1v-3zM618 215v3h1v-3zM618 221v3h1v-3zM618 227v3h1v-3zM618 233v3h1v-3zM618 239v3h1v-3zM618 245v3h1v-3zM618 251v3h1v-3zM618 257v3h1v-3zM618 263v3h1v-3zM618 269v3h1v-3zM618 275v3h1v-3zM618 281v3h1v-3zM618 287v2h1v-2z" fill="#778899"/>
<path d="M650 36v2h1v-2zM650 41v3h1v-3zM650 47v3h1v-3zM650 53v3h1v-3zM650 59v3h1v-3zM650 65v3h1v-3zM650 71v3h1v-3zM650 77v3h1v-3zM650 83v3h1v-3zM650 89v3h1v-3zM650 95v3h1v-3zM650 101v3h1v-3zM650 107v3h1v-3zM650 113v3h1v-3zM650 119v3h1v-3zM650 125v3h1v-3zM650 131v3h1v-3zM650 137v3h1v-3zM650 143v3h1v-3zM650 149v3h1v-3zM650 155v3h1v-3zM650 161v3h1v-3zM650 167v3h1v-3zM650 173v3h1v-3zM650 179v3h1v-3zM650 185v3h1v-3zM650 191v3h1v-3zM650 197v3h1v-3zM650 203v3h1v-3zM650 209v3h1v-3zM650 215v3h1v-3zM650 221v3h1v-3zM650 227v3h1v-3zM650 233v3h1v-3zM650 239v3h1v-3zM650 245v3h1v-3zM650 251v3h1v-3zM650 257v3h1v-3zM650 263v3h1v-3zM650 269v3h1v-3zM650 275v3h1v-3zM650 281v3h1v-3zM650 287v2h1v-2z" fill="#778899"/>
<path d="M130 36v2h1v-2zM130 41v3h1v-3zM130 47v3h1v-3zM130 53v3h1v-3zM130 59v3h1v-3zM130 65v3h1v-3zM130 71v3h1v-3zM130 77v3h1v-3zM130 83v3h1v-3zM130 89v3h1v-3zM130 95v3h1v-3zM130 101v3h1v-3zM130 107v3h1v-3zM130 113v3h1v-3zM130 119v3h1v-3zM130 125v3h1v-3zM130 131v3h1v-3zM130 137v3h1v-3zM130 143v3h1v-3zM130 149v3h1v-3zM130 155v3h1v-3zM130 161v3h1v-3zM130 167v3h1v-3zM130 173v3h1v-3zM130 179v3h1v-3zM130 185v3h1v-3zM130 191v3h1v-3zM130 197v3h1v-3zM130 203v3h1v-3zM130 209v3h1v-3zM130 215v3h1v-3zM130 221v3h1v-3zM130 227v3h1v-3zM130 233v3h1v-3zM130 239v3h1v-3zM130 245v3h1v-3zM130 251v3h1v-3zM130 257v3h1v-3zM130 263v3h1v-3zM130 269v3h1v-3zM130 275v3h1v-3zM130 281v3h1v-3zM130 287v2h1v-2z" fill="#f4f4f4"/>
<path d="M322 36v2h1v-2zM322 41v3h1v-3zM322 47v3h1v-3zM322 53v3h1v-3zM322 59v3h1v-3zM322 65v3h1v-3zM322 71v3h1v-3zM322 77v3h1v-3zM322 83v3h1v-3zM322 89v3h1v-3zM322 95v3h1v-3zM322 101v3h1v-3zM322 107v3h1v-3zM322 113v3h1v-3zM322 119v3h1v-3zM322 125v3h1v-3zM322 131v3h1v-3zM322 137v3h1v-3zM322 143v3h1v-3zM322 149v3h1v-3zM322 155v3h1v-3zM322 161v3h1v-3zM322 167v3h1v-3zM322 173v3h1v-3zM322 179v3h1v-3zM322 185v3h1v-3zM322 191v3h1v-3zM322 197v3h1v-3zM322 203v3h1v-3zM322 209v3h1v-3zM322 215v3h1v-3zM322 221v3h1v-3zM322 227v3h1v-3zM322 233v3h1v-3zM322 239v3h1v-3zM322 245v3h1v-3zM322 251v3h1v-3zM322 257v3h1v-3zM322 263v3h1v-3zM322 269v3h1v-3zM322 275v3h1v-3zM322 281v3h1v-3zM322 287v2h1v-2z" fill="#f4f4f4"/>
<path d="M514 36v2h1v-2zM514 41v3h1v-3zM514 47v3h1v-3zM514 53v3h1v-3zM514 59v3h1v-3zM514 65v3h1v-3zM514 71v3h1v-3zM514 77v3h1v-3zM514 83v3h1v-3zM514 89v3h1v-3zM514 95v3h1v-3zM514 101v3h1v-3zM514 107v3h1v-3zM514 113v3h1v-3zM514 119v3h1v-3zM514 125v3h1v-3zM514 131v3h1v-3zM514 137v3h1v-3zM514 143v3h1v-3zM514 149v3h1v-3zM514 155v3h1v-3zM514 161v3h1v-3zM514 167v3h1v-3zM514 173v3h1v-3zM514 179v3h1v-3zM514 185v3h1v-3zM514 191v3h1v-3zM514 197v3h1v-3zM514 203v3h1v-3zM514 209v3h1v-3zM514 215v3h1v-3zM514 221v3h1v-3zM514 227v3h1v-3zM514 233v3h1v-3zM514 239v3h1v-3zM514 245v3h1v-3zM514 251v3h1v-3zM514 257v3h1v-3zM514 263v3h1v-3zM514 269v3h1v-3zM514 275v3h1v-3zM514 281v3h1v-3zM514 287v2h1v-2z" fill="#f4f4f4"/>
<path d="M11 304h3v1h-3zM17 304h3v1h-3zM23 304h3v1h-3zM29 304h3v1h-3zM35 304h3v1h-3zM41 304h3v1h-3zM47 304h3v1h-3zM53 304h3v1h-3zM59 304h3v1h-3zM65 304h3v1h-3zM71 304h3v1h-3zM77 304h3v1h-3zM83 304h3v1h-3zM89 304h3v1h-3zM95 304h3v1h-3zM101 304h3v1h-3zM107 304h3v1h-3zM113 304h3v1h-3zM119 304h3v1h-3zM125 304h3v1h-3zM131 304h3v1h-3zM137 304h3v1h-3zM143 304h3v1h-3zM149 304h3v1h-3zM155 304h3v1h-3zM161 304h3v1h-3zM167 304h3v1h-3zM173 304h3v1h-3zM179 304h3v1h-3zM185 304h3v1h-3zM191 304h3v1h-3zM197 304h3v1h-3zM203 304h3v1h-3zM209 304h3v1h-3zM215 304h3v1h-3zM221 304h3v1h-3zM227 304h3v1h-3zM233 304h3v1h-3zM239 304h3v1h-3zM245 304h3v1h-3zM251 304h3v1h-3zM257 304h3v1h-3zM263 304h3v1h-3zM269 304h3v1h-3zM275 304h3v1h-3zM281 304h3v1h-3zM287 304h3v1h-3zM293 304h3v1h-3zM299 304h3v1h-3zM305 304h3v1h-3zM311 304h3v1h-3zM317 304h3v1h-3zM323 304h3v1h-3zM329 304h3v1h-3zM335 304h3v1h-3zM341 304h3v1h-3zM347 304h3v1h-3zM353 304h3v1h-3zM359 304h3v1h-3zM365 304h3v1h-3zM371 304h3v1h-3zM377 304h3v1h-3zM383 304h3v1h-3zM389 304h3v1h-3zM395 304h3v1h-3zM401 304h3v1h-3zM407 304h3v1h-3zM413 304h3v1h-3zM419 304h3v1h-3zM425 304h3v1h-3zM431 304h3v1h-3zM437 304h3v1h-3zM443 304h3v1h-3zM449 304h3v1h-3zM455 304h3v1h-3zM461 304h3v1h-3zM467 304h3v1h-3zM473 304h3v1h-3zM479 304h3v1h-3zM485 304h3v1h-3zM491 304h3v1h-3zM497 304h3v1h-3zM503 304h3v1h-3zM509 304h3v1h-3zM515 304h3v1h-3zM521 304h3v1h-3zM527 304h3v1h-3zM533 304h3v1h-3zM539 304h3v1h-3zM545 304h3v1h-3zM551 304h3v1h-3zM557 304h3v1h-3zM563 304h3v1h-3zM569 304h3v1h-3zM575 304h3v1h-3zM581 304h3v1h-3zM587 304h3v1h-3zM593 304h3v1h-3zM599 304h3v1h-3zM605 304h3v1h-3zM611 304h3v1h-3zM617 304h3v1h-3zM623 304h3v1h-3zM629 304h3v1h-3zM635 304h3v1h-3zM641 304h3v1h-3zM647 304h3v1h-3zM653 304h3v1h-3zM659 304h3v1h-3zM665 304h3v1h-3zM671 304h3v1h-3zM677 304h1v1h-1z" fill="#c4c4c4"/>
<path d="M11 315h3v1h-3zM17 315h3v1h-3zM23 315h3v1h-3zM29 315h3v1h-3zM35 315h3v1h-3zM41 315h3v1h-3zM47 315h3v1h-3zM53 315h3v1h-3zM59 315h3v1h-3zM65 315h3v1h-3zM71 315h3v1h-3zM77 315h3v1h-3zM83 315h3v1h-3zM89 315h3v1h-3zM95 315h3v1h-3zM101 315h3v1h-3zM107 315h3v1h-3zM113 315h3v1h-3zM119 315h3v1h-3zM125 315h3v1h-3zM131 315h3v1h-3zM137 315h3v1h-3zM143 315h3v1h-3zM149 315h3v1h-3zM155 315h3v1h-3zM161 315h3v1h-3zM167 315h3v1h-3zM173 315h3v1h-3zM179 315h3v1h-3zM185 315h3v1h-3zM191 315h3v1h-3zM197 315h3v1h-3zM203 315h3v1h-3zM209 315h3v1h-3zM215 315h3v1h-3zM221 315h3v1h-3zM227 315h3v1h-3zM233 315h3v1h-3zM239 315h3v1h-3zM245 315h3v1h-3zM251 315h3v1h-3zM257 315h3v1h-3zM263 315h3v1h-3zM269 315h3v1h-3zM275 315h3v1h-3zM281 315h3v1h-3zM287 315h3v1h-3zM293 315h3v1h-3zM299 315h3v1h-3zM305 315h3v1h-3zM311 315h3v1h-3zM317 315h3v1h-3zM323 315h3v1h-3zM329 315h3v1h-3zM335 315h3v1h-3zM341 315h3v1h-3zM347 315h3v1h-3zM353 315h3v1h-3zM359 315h3v1h-3zM365 315h3v1h-3zM371 315h3v1h-3zM377 315h3v1h-3zM383 315h3v1h-3zM389 315h3v1h-3zM395 315h3v1h-3zM401 315h3v1h-3zM407 315h3v1h-3zM413 315h3v1h-3zM419 315h3v1h-3zM425 315h3v1h-3zM431 315h3v1h-3zM437 315h3v1h-3zM443 315h3v1h-3zM449 315h3v1h-3zM455 315h3v1h-3zM461 315h3v1h-3zM467 315h3v1h-3zM473 315h3v1h-3zM479 315h3v1h-3zM485 315h3v1h-3zM491 315h3v1h-3zM497 315h3v1h-3zM503 315h3v1h-3zM509 315h3v1h-3zM515 315h3v1h-3zM521 315h3v1h-3zM527 315h3v1h-3zM533 315h3v1h-3zM539 315h3v1h-3zM545 315h3v1h-3zM551 315h3v1h-3zM557 315h3v1h-3zM563 315h3v1h-3zM569 315h3v1h-3zM575 315h3v1h-3zM581 315h3v1h-3zM587 315h3v1h-3zM593 315h3v1h-3zM599 315h3v1h-3zM605 315h3v1h-3zM611 315h3v1h-3zM617 315h3v1h-3zM623 315h3v1h-3zM629 315h3v1h-3zM635 315h3v1h-3zM641 315h3v1h-3zM647 315h3v1h-3zM653 315h3v1h-3zM659 315h3v1h-3zM665 315h3v1h-3zM671 315h3v1h-3zM677 315h1v1h-1z" fill="#c4c4c4"/>
<path d="M11 333h3v1h-3zM17 333h3v1h-3zM23 333h3v1h-3zM29 333h3v1h-3zM35 333h3v1h-3zM41 333h3v1h-3zM47 333h3v1h-3zM53 333h3v1h-3zM59 333h3v1h-3zM65 333h3v1h-3zM71 333h3v1h-3zM77 333h3v1h-3zM83 333h3v1h-3zM89 333h3v1h-3zM95 333h3v1h-3zM101 333h3v1h-3zM107 333h3v1h-3zM113 333h3v1h-3zM119 333h3v1h-3zM125 333h3v1h-3zM131 333h3v1h-3zM137 333h3v1h-3zM143 333h3v1h-3zM149 333h3v1h-3zM155 333h3v1h-3zM161 333h3v1h-3zM167 333h3v1h-3zM173 333h3v1h-3zM179 333h3v1h-3zM185 333h3v1h-3zM191 333h3v1h-3zM197 333h3v1h-3zM203 333h3v1h-3zM209 333h3v1h-3zM215 333h3v1h-3zM221 333h3v1h-3zM227 333h3v1h-3zM233 333h3v1h-3zM239 333h3v1h-3zM245 333h3v1h-3zM251 333h3v1h-3zM257 333h3v1h-3zM263 333h3v1h-3zM269 333h3v1h-3zM275 333h3v1h-3zM281 333h3v1h-3zM287 333h3v1h-3zM293 333h3v1h-3zM299 333h3v1h-3zM305 333h3v1h-3zM311 333h3v1h-3zM317 333h3v1h-3zM323 333h3v1h-3zM329 333h3v1h-3zM335 333h3v1h-3zM341 333h3v1h-3zM347 333h3v1h-3zM353 333h3v1h-3zM359 333h3v1h-3zM365 333h3v1h-3zM371 333h3v1h-3zM377 333h3v1h-3zM383 333h3v1h-3zM389 333h3v1h-3zM395 333h3v1h-3zM401 333h3v1h-3zM407 333h3v1h-3zM413 333h3v1h-3zM419 333h3v1h-3zM425 333h3v1h-3zM431 333h3v1h-3zM437 333h3v1h-3zM443 333h3v1h-3zM449 333h3v1h-3zM455 333h3v1h-3zM461 333h3v1h-3zM467 333h3v1h-3zM473 333h3v1h-3zM479 333h3v1h-3zM485 333h3v1h-3zM491 333h3v1h-3zM497 333h3v1h-3zM503 333h3v1h-3zM509 333h3v1h-3zM515 333h3v1h-3zM521 333h3v1h-3zM527 333h3v1h-3zM533 333h3v1h-3zM539 333h3v1h-3zM545 333h3v1h-3zM551 333h3v1h-3zM557 333h3v1h-3zM563 333h3v1h-3zM569 333h3v1h-3zM575 333h3v1h-3zM581 333h3v1h-3zM587 333h3v1h-3zM593 333h3v1h-3zM599 333h3v1h-3zM605 333h3v1h-3zM611 333h3v1h-3zM617 333h3v1h-3zM623 333h3v1h-3zM629 333h3v1h-3zM635 333h3v1h-3zM641 333h3v1h-3zM647 333h3v1h-3zM653 333h3v1h-3zM659 333h3v1h-3zM665 333h3v1h-3zM671 333h3v1h-3zM677 333h1v1h-1z" fill="#c4c4c4"/>
<path d="M11 361h3v1h-3zM17 361h3v1h-3zM23 361h3v1h-3zM29 361h3v1h-3zM35 361h3v1h-3zM41 361h3v1h-3zM47 361h3v1h-3zM53 361h3v1h-3zM59 361h3v1h-3zM65 361h3v1h-3zM71 361h3v1h-3zM77 361h3v1h-3zM83 361h3v1h-3zM89 361h3v1h-3zM95 361h3v1h-3zM101 361h3v1h-3zM107 361h3v1h-3zM113 361h3v1h-3zM119 361h3v1h-3zM125 361h3v1h-3zM131 361h3v1h-3zM137 361h3v1h-3zM143 361h3v1h-3zM149 361h3v1h-3zM155 361h3v1h-3zM161 361h3v1h-3zM167 361h3v1h-3zM173 361h3v1h-3zM179 361h3v1h-3zM185 361h3v1h-3zM191 361h3v1h-3zM197 361h3v1h-3zM203 361h3v1h-3zM209 361h3v1h-3zM215 361h3v1h-3zM221 361h3v1h-3zM227 361h3v1h-3zM233 361h3v1h-3zM239 361h3v1h-3zM245 361h3v1h-3zM251 361h3v1h-3zM257 361h3v1h-3zM263 361h3v1h-3zM269 361h3v1h-3zM275 361h3v1h-3zM281 361h3v1h-3zM287 361h3v1h-3zM293 361h3v1h-3zM299 361h3v1h-3zM305 361h3v1h-3zM311 361h3v1h-3zM317 361h3v1h-3zM323 361h3v1h-3zM329 361h3v1h-3zM335 361h3v1h-3zM341 361h3v1h-3zM347 361h3v1h-3zM353 361h3v1h-3zM359 361h3v1h-3zM365 361h3v1h-3zM371 361h3v1h-3zM377 361h3v1h-3zM383 361h3v1h-3zM389 361h3v1h-3zM395 361h3v1h-3zM401 361h3v1h-3zM407 361h3v1h-3zM413 361h3v1h-3zM419 361h3v1h-3zM425 361h3v1h-3zM431 361h3v1h-3zM437 361h3v1h-3zM443 361h3v1h-3zM449 361h3v1h-3zM455 361h3v1h-3zM461 361h3v1h-3zM467 361h3v1h-3zM473 361h3v1h-3zM479 361h3v1h-3zM485 361h3v1h-3zM491 361h3v1h-3zM497 361h3v1h-3zM503 361h3v1h-3zM509 361h3v1h-3zM515 361h3v1h-3zM521 361h3v1h-3zM527 361h3v1h-3zM533 361h3v1h-3zM539 361h3v1h-3zM545 361h3v1h-3zM551 361h3v1h-3zM557 361h3v1h-3zM563 361h3v1h-3zM569 361h3v1h-3zM575 361h3v1h-3zM581 361h3v1h-3zM587 361h3v1h-3zM593 361h3v1h-3zM599 361h3v1h-3zM605 361h3v1h-3zM611 361h3v1h-3zM617 361h3v1h-3zM623 361h3v1h-3zM629 361h3v1h-3zM635 361h3v1h-3zM641 361h3v1h-3zM647 361h3v1h-3zM653 361h3v1h-3zM659 361h3v1h-3zM665 361h3v1h-3zM671 361h3v1h-3zM677 361h1v1h-1z" fill="#c4c4c4"/>
<path d="M11 390h3v1h-3zM17 390h3v1h-3zM23 390h3v1h-3zM29 390h3v1h-3zM35 390h3v1h-3zM41 390h3v1h-3zM47 390h3v1h-3zM53 390h3v1h-3zM59 390h3v1h-3zM65 390h3v1h-3zM71 390h3v1h-3zM77 390h3v1h-3zM83 390h3v1h-3zM89 390h3v1h-3zM95 390h3v1h-3zM101 390h3v1h-3zM107 390h3v1h-3zM113 390h3v1h-3zM119 390h3v1h-3zM125 390h3v1h-3zM131 390h3v1h-3zM137 390h3v1h-3zM143 390h3v1h-3zM149 390h3v1h-3zM155 390h3v1h-3zM161 390h3v1h-3zM167 390h3v1h-3zM173 390h3v1h-3zM179 390h3v1h-3zM185 390h3v1h-3zM191 390h3v1h-3zM197 390h3v1h-3zM203 390h3v1h-3zM209 390h3v1h-3zM215 390h3v1h-3zM221 390h3v1h-3zM227 390h3v1h-3zM233 390h3v1h-3zM239 390h3v1h-3zM245 390h3v1h-3zM251 390h3v1h-3zM257 390h3v1h-3zM263 390h3v1h-3zM269 390h3v1h-3zM275 390h3v1h-3zM281 390h3v1h-3zM287 390h3v1h-3zM293 390h3v1h-3zM299 390h3v1h-3zM305 390h3v1h-3zM311 390h3v1h-3zM317 390h3v1h-3zM323 390h3v1h-3zM329 390h3v1h-3zM335 390h3v1h-3zM341 390h3v1h-3zM347 390h3v1h-3zM353 390h3v1h-3zM359 390h3v1h-3zM365 390h3v1h-3zM371 390h3v1h-3zM377 390h3v1h-3zM383 390h3v1h-3zM389 390h3v1h-3zM395 390h3v1h-3zM401 390h3v1h-3zM407 390h3v1h-3zM413 390h3v1h-3zM419 390h3v1h-3zM425 390h3v1h-3zM431 390h3v1h-3zM437 390h3v1h-3zM443 390h3v1h-3zM449 390h3v1h-3zM455 390h3v1h-3zM461 390h3v1h-3zM467 390h3v1h-3zM473 390h3v1h-3zM479 390h3v1h-3zM485 390h3v1h-3zM491 390h3v1h-3zM497 390h3v1h-3zM503 390h3v1h-3zM509 390h3v1h-3zM515 390h3v1h-3zM521 390h3v1h-3zM527 390h3v1h-3zM533 390h3v1h-3zM539 390h3v1h-3zM545 390h3v1h-3zM551 390h3v1h-3zM557 390h3v1h-3zM563 390h3v1h-3zM569 390h3v1h-3zM575 390h3v1h-3zM581 390h3v1h-3zM587 390h3v1h-3zM593 390h3v1h-3zM599 390h3v1h-3zM605 390h3v1h-3zM611 390h3v1h-3zM617 390h3v1h-3zM623 390h3v1h-3zM629 390h3v1h-3zM635 390h3v1h-3zM641 390h3v1h-3zM647 390h3v1h-3zM653 390h3v1h-3zM659 390h3v1h-3zM665 390h3v1h-3zM671 390h3v1h-3zM677 390h1v1h-1z" fill="#c4c4c4"/>
<path d="M11 407h3v1h-3zM17 407h3v1h-3zM23 407h3v1h-3zM29 407h3v1h-3zM35 407h3v1h-3zM41 407h3v1h-3zM47 407h3v1h-3zM53 407h3v1h-3zM59 407h3v1h-3zM65 407h3v1h-3zM71 407h3v1h-3zM77 407h3v1h-3zM83 407h3v1h-3zM89 407h3v1h-3zM95 407h3v1h-3zM101 407h3v1h-3zM107 407h3v1h-3zM113 407h3v1h-3zM119 407h3v1h-3zM125 407h3v1h-3zM131 407h3v1h-3zM137 407h3v1h-3zM143 407h3v1h-3zM149 407h3v1h-3zM155 407h3v1h-3zM161 407h3v1h-3zM167 407h3v1h-3zM173 407h3v1h-3zM179 407h3v1h-3zM185 407h3v1h-3zM191 407h3v1h-3zM197 407h3v1h-3zM203 407h3v1h-3zM209 407h3v1h-3zM215 407h3v1h-3zM221 407h3v1h-3zM227 407h3v1h-3zM233 407h3v1h-3zM239 407h3v1h-3zM245 407h3v1h-3zM251 407h3v1h-3zM257 407h3v1h-3zM263 407h3v1h-3zM269 407h3v1h-3zM275 407h3v1h-3zM281 407h3v1h-3zM287 407h3v1h-3zM293 407h3v1h-3zM299 407h3v1h-3zM305 407h3v1h-3zM311 407h3v1h-3zM317 407h3v1h-3zM323 407h3v1h-3zM329 407h3v1h-3zM335 407h3v1h-3zM341 407h3v1h-3zM347 407h3v1h-3zM353 407h3v1h-3zM359 407h3v1h-3zM365 407h3v1h-3zM371 407h3v1h-3zM377 407h3v1h-3zM383 407h3v1h-3zM389 407h3v1h-3zM395 407h3v1h-3zM401 407h3v1h-3zM407 407h3v1h-3zM413 407h3v1h-3zM419 407h3v1h-3zM425 407h3v1h-3zM431 407h3v1h-3zM437 407h3v1h-3zM443 407h3v1h-3zM449 407h3v1h-3zM455 407h3v1h-3zM461 407h3v1h-3zM467 407h3v1h-3zM473 407h3v1h-3zM479 407h3v1h-3zM485 407h3v1h-3zM491 407h3v1h-3zM497 407h3v1h-3zM503 407h3v1h-3zM509 407h3v1h-3zM515 407h3v1h-3zM521 407h3v1h-3zM527 407h3v1h-3zM533 407h3v1h-3zM539 407h3v1h-3zM545 407h3v1h-3zM551 407h3v1h-3zM557 407h3v1h-3zM563 407h3v1h-3zM569 407h3v1h-3zM575 407h3v1h-3zM581 407h3v1h-3zM587 407h3v1h-3zM593 407h3v1h-3zM599 407h3v1h-3zM605 407h3v1h-3zM611 407h3v1h-3zM617 407h3v1h-3zM623 407h3v1h-3zM629 407h3v1h-3zM635 407h3v1h-3zM641 407h3v1h-3zM647 407h3v1h-3zM653 407h3v1h-3zM659 407h3v1h-3zM665 407h3v1h-3zM671 407h3v1h-3zM677 407h1v1h-1z" fill="#c4c4c4"/>
<path d="M42 293v3h1v-3zM42 299v3h1v-3zM42 305v3h1v-3zM42 311v3h1v-3zM42 317v3h1v-3zM42 323v3h1v-3zM42 329v3h1v-3zM42 335v3h1v-3zM42 341v3h1v-3zM42 347v3h1v-3zM42 353v3h1v-3zM42 359v3h1v-3zM42 365v3h1v-3zM42 371v3h1v-3zM42 377v3h1v-3zM42 383v3h1v-3zM42 389v3h1v-3zM42 395v3h1v-3zM42 401v3h1v-3zM42 407v3h1v-3zM42 413v3h1v-3z" fill="#778899"/>
<path d="M74 293v3h1v-3zM74 299v3h1v-3zM74 305v3h1v-3zM74 311v3h1v-3zM74 317v3h1v-3zM74 323v3h1v-3zM74 329v3h1v-3zM74 335v3h1v-3zM74 341v3h1v-3zM74 347v3h1v-3zM74 353v3h1v-3zM74 359v3h1v-3zM74 365v3h1v-3zM74 371v3h1v-3zM74 377v3h1v-3zM74 383v3h1v-3zM74 389v3h1v-3zM74 395v3h1v-3zM74 401v3h1v-3zM74 407v3h1v-3zM74 413v3h1v-3z" fill="#778899"/>
<path d="M106 293v3h1v-3zM106 299v3h1v-3zM106 305v3h1v-3zM106 311v3h1v-3zM106 317v3h1v-3zM106 323v3h1v-3zM106 329v3h1v-3zM106 335v3h1v-3zM106 341v3h1v-3zM106 347v3h1v-3zM106 353v3h1v-3zM106 359v3h1v-3zM106 365v3h1v-3zM106 371v3h1v-3zM106 377v3h1v-3zM106 383v3h1v-3zM106 389v3h1v-3zM106 395v3h1v-3zM106 401v3h1v-3zM106 407v3h1v-3zM106 413v3h1v-3z" fill="#778899"/>
<path d="M138 293v3h1v-3zM138 299v3h1v-3zM138 305v3h1v-3zM138 311v3h1v-3zM138 317v3h1v-3zM138 323v3h1v-3zM138 329v3h1v-3zM138 335v3h1v-3zM138 341v3h1v-3zM138 347v3h1v-3zM138 353v3h1v-3zM138 359v3h1v-3zM138 365v3h1v-3zM138 371v3h1v-3zM138 377v3h1v-3zM138 383v3h1v-3zM138 389v3h1v-3zM138 395v3h1v-3zM138 401v3h1v-3zM138 407v3h1v-3zM138 413v3h1v-3z" fill="#778899"/>
<path d="M170 293v3h1v-3zM170 299v3h1v-3zM170 305v3h1v-3zM170 311v3h1v-3zM170 317v3h1v-3zM170 323v3h1v-3zM170 329v3h1v-3zM170 335v3h1v-3zM170 341v3h1v-3zM170 347v3h1v-3zM170 353v3h1v-3zM170 359v3h1v-3zM170 365v3h1v-3zM170 371v3h1v-3zM170 377v3h1v-3zM170 383v3h1v-3zM170 389v3h1v-3zM170 395v3h1v-3zM170 401v3h1v-3zM170 407v3h1v-3zM170 413v3h1v-3z" fill="#778899"/>
<path d="M202 293v3h1v-3zM202 299v3h1v-3zM202 305v3h1v-3zM202 311v3h1v-3zM202 317v3h1v-3zM202 323v3h1v-3zM202 329v3h1v-3zM202 335v3h1v-3zM202 341v3h1v-3zM202 347v3h1v-3zM202 353v3h1v-3zM202 359v3h1v-3zM202 365v3h1v-3zM202 371v3h1v-3zM202 377v3h1v-3zM202 383v3h1v-3zM202 389v3h1v-3zM202 395v3h1v-3zM202 401v3h1v-3zM202 407v3h1v-3zM202 413v3h1v-3z" fill="#778899"/>
<path d="M234 293v3h1v-3zM234 299v3h1v-3zM234 305v3h1v-3zM234 311v3h1v-3zM234 317v3h1v-3zM234 323v3h1v-3zM234 329v3h1v-3zM234 335v3h1v-3zM234 341v3h1v-3zM234 347v3h1v-3zM234 353v3h1v-3zM234 359v3h1v-3zM234 365v3h1v-3zM234 371v3h1v-3zM234 377v3h1v-3zM234 383v3h1v-3zM234 389v3h1v-3zM234 395v3h1v-3zM234 401v3h1v-3zM234 407v3h1v-3zM234 413v3h1v-3z" fill="#778899"/>
<path d="M266 293v3h1v-3zM266 299v3h1v-3zM266 305v3h1v-3zM266 311v3h1v-3zM266 317v3h1v-3zM266 323v3h1v-3zM266 329v3h1v-3zM266 335v3h1v-3zM266 341v3h1v-3zM266 347v3h1v-3zM266 353v3h1v-3zM266 359v3h1v-3zM266 365v3h1v-3zM266 371v3h1v-3zM266 377v3h1v-3zM266 383v3h1v-3zM266 389v3h1v-3zM266 395v3h1v-3zM266 401v3h1v-3zM266 407v3h1v-3zM266 413v3h1v-3z" fill="#778899"/>
<path d="M298 293v3h1v-3zM298 299v3h1v-3zM298 305v3h1v-3zM298 311v3h1v-3zM298 317v3h1v-3zM298 323v3h1v-3zM298 329v3h1v-3zM298 335v3h1v-3zM298 341v3h1v-3zM298 347v3h1v-3zM298 353v3h1v-3zM298 359v3h1v-3zM298 365v3h1v-3zM298 371v3h1v-3zM298 377v3h1v-3zM298 383v3h1v-3zM298 389v3h1v-3zM298 395v3h1v-3zM298 401v3h1v-3zM298 407v3h1v-3zM298 413v3h1v-3z" fill="#778899"/>
<path d="M330 293v3h1v-3zM330 299v3h1v-3zM330 305v3h1v-3zM330 311v3h1v-3zM330 317v3h1v-3zM330 323v3h1v-3zM330 329v3h1v-3zM330 335v3h1v-3zM330 341v3h1v-3zM330 347v3h1v-3zM330 353v3h1v-3zM330 359v3h1v-3zM330 365v3h1v-3zM330 371v3h1v-3zM330 377v3h1v-3zM330 383v3h1v-3zM330 389v3h1v-3zM330 395v3h1v-3zM330 401v3h1v-3zM330 407v3h1v-3zM330 413v3h1v-3z" fill="#778899"/>
<path d="M362 293v3h1v-3zM362 299v3h1v-3zM362 305v3h1v-3zM362 311v3h1v-3zM362 317v3h1v-3zM362 323v3h1v-3zM362 329v3h1v-3zM362 335v3h1v-3zM362 341v3h1v-3zM362 347v3h1v-3zM362 353v3h1v-3zM362 359v3h1v-3zM362 365v3h1v-3zM362 371v3h1v-3zM362 377v3h1v-3zM362 383v3h1v-3zM362 389v3h1v-3zM362 395v3h1v-3zM362 401v3h1v-3zM362 407v3h1v-3zM362 413v3h1v-3z" fill="#778899"/>
<path d="M394 293v3h1v-3zM394 299v3h1v-3zM394 305v3h1v-3zM394 311v3h1v-3zM394 317v3h1v-3zM394 323v3h1v-3zM394 329v3h1v-3zM394 335v3h1v-3zM394 341v3h1v-3zM394 347v3h1v-3zM394 353v3h1v-3zM394 359v3h1v-3zM394 365v3h1v-3zM394 371v3h1v-3zM394 377v3h1v-3zM394 383v3h1v-3zM394 389v3h1v-3zM394 395v3h1v-3zM394 401v3h1v-3zM394 407v3h1v-3zM394 413v3h1v-3z" fill="#778899"/>
<path d="M426 293v3h1v-3zM426 299v3h1v-3zM426 305v3h1v-3zM426 311v3h1v-3zM426 317v3h1v-3zM426 323v3h1v-3zM426 329v3h1v-3zM426 335v3h1v-3zM426 341v3h1v-3zM426 347v3h1v-3zM426 353v3h1v-3zM426 359v3h1v-3zM426 365v3h1v-3zM426 371v3h1v-3zM426 377v3h1v-3zM426 383v3h1v-3zM426 389v3h1v-3zM426 395v3h1v-3zM426 401v3h1v-3zM426 407v3h1v-3zM426 413v3h1v-3z" fill="#778899"/>
<path d="M458 293v3h1v-3zM458 299v3h1v-3zM458 305v3h1v-3zM458 311v3h1v-3zM458 317v3h1v-3zM458 323v3h1v-3zM458 329v3h1v-3zM458 335v3h1v-3zM458 341v3h1v-3zM458 347v3h1v-3zM458 353v3h1v-3zM458 359v3h1v-3zM458 365v3h1v-3zM458 371v3h1v-3zM458 377v3h1v-3zM458 383v3h1v-3zM458 389v3h1v-3zM458 395v3h1v-3zM458 401v3h1v-3zM458 407v3h1v-3zM458 413v3h1v-3z" fill="#778899"/>
<path d="M490 293v3h1v-3zM490 299v3h1v-3zM490 305v3h1v-3zM490 311v3h1v-3zM490 317v3h1v-3zM490 323v3h1v-3zM490 329v3h1v-3zM490 335v3h1v-3zM490 341v3h1v-3zM490 347v3h1v-3zM490 353v3h1v-3zM490 359v3h1v-3zM490 365v3h1v-3zM490 371v3h1v-3zM490 377v3h1v-3zM490 383v3h1v-3zM490 389v3h1v-3zM490 395v3h1v-3zM490 401v3h1v-3zM490 407v3h1v-3zM490 413v3h1v-3z" fill="#778899"/>
<path d="M522 293v3h1v-3zM522 299v3h1v-3zM522 305v3h1v-3zM522 311v3h1v-3zM522 317v3h1v-3zM522 323v3h1v-3zM522 329v3h1v-3zM522 335v3h1v-3zM522 341v3h1v-3zM522 347v3h1v-3zM522 353v3h1v-3zM522 359v3h1v-3zM522 365v3h1v-3zM522 371v3h1v-3zM522 377v3h1v-3zM522 383v3h1v-3zM522 389v3h1v-3zM522 395v3h1v-3zM522 401v3h1v-3zM522 407v3h1v-3zM522 413v3h1v-3z" fill="#778899"/>
<path d="M554 293v3h1v-3zM554 299v3h1v-3zM554 305v3h1v-3zM554 311v3h1v-3zM554 317v3h1v-3zM554 323v3h1v-3zM554 329v3h1v-3zM554 335v3h1v-3zM554 341v3h1v-3zM554 347v3h1v-3zM554 353v3h1v-3zM554 359v3h1v-3zM554 365v3h1v-3zM554 371v3h1v-3zM554 377v3h1v-3zM554 383v3h1v-3zM554 389v3h1v-3zM554 395v3h1v-3zM554 401v3h1v-3zM554 407v3h1v-3zM554 413v3h1v-3z" fill="#778899"/>
<path d="M586 293v3h1v-3zM586 299v3h1v-3zM586 305v3h1v-3zM586 311v3h1v-3zM586 317v3h1v-3zM586 323v3h1v-3zM586 329v3h1v-3zM586 335v3h1v-3zM586 341v3h1v-3zM586 347v3h1v-3zM586 353v3h1v-3zM586 359v3h1v-3zM586 365v3h1v-3zM586 371v3h1v-3zM586 377v3h1v-3zM586 383v3h1v-3zM586 389v3h1v-3zM586 395v3h1v-3zM586 401v3h1v-3zM586 407v3h1v-3zM586 413v3h1v-3z" fill="#778899"/>
<path d="M618 293v3h1v-3zM618 299v3h1v-3zM618 305v3h1v-3zM618 311v3h1v-3zM618 317v3h1v-3zM618 323v3h1v-3zM618 329v3h1v-3zM618 335v3h1v-3zM618 341v3h1v-3zM618 347v3h1v-3zM618 353v3h1v-3zM618 359v3h1v-3zM618 365v3h1v-3zM618 371v3h1v-3zM618 377v3h1v-3zM618 383v3h1v-3zM618 389v3h1v-3zM618 395v3h1v-3zM618 401v3h1v-3zM618 407v3h1v-3zM618 413v3h1v-3z" fill="#778899"/>
<path d="M650 293v3h1v-3zM650 299v3h1v-3zM650 305v3h1v-3zM650 311v3h1v-3zM650 317v3h1v-3zM650 323v3h1v-3zM650 329v3h1v-3zM650 335v3h1v-3zM650 341v3h1v-3zM650 347v3h1v-3zM650 353v3h1v-3zM650 359v3h1v-3zM650 365v3h1v-3zM650 371v3h1v-3zM650 377v3h1v-3zM650 383v3h1v-3zM650 389v3h1v-3zM650 395v3h1v-3zM650 401v3h1v-3zM650 407v3h1v-3zM650 413v3h1v-3z" fill="#778899"/>
<path d="M130 293v3h1v-3zM130 299v3h1v-3zM130 305v3h1v-3zM130 311v3h1v-3zM130 317v3h1v-3zM130 323v3h1v-3zM130 329v3h1v-3zM130 335v3h1v-3zM130 341v3h1v-3zM130 347v3h1v-3zM130 353v3h1v-3zM130 359v3h1v-3zM130 365v3h1v-3zM130 371v3h1v-3zM130 377v3h1v-3zM130 383v3h1v-3zM130 389v3h1v-3zM130 395v3h1v-3zM130 401v3h1v-3zM130 407v3h1v-3zM130 413v3h1v-3z" fill="#f4f4f4"/>
<path d="M322 293v3h1v-3zM322 299v3h1v-3zM322 305v3h1v-3zM322 311v3h1v-3zM322 317v3h1v-3zM322 323v3h1v-3zM322 329v3h1v-3zM322 335v3h1v-3zM322 341v3h1v-3zM322 347v3h1v-3zM322 353v3h1v-3zM322 359v3h1v-3zM322 365v3h1v-3zM322 371v3h1v-3zM322 377v3h1v-3zM322 383v3h1v-3zM322 389v3h1v-3zM322 395v3h1v-3zM322 401v3h1v-3zM322 407v3h1v-3zM322 413v3h1v-3z" fill="#f4f4f4"/>
<path d="M514 293v3h1v-3zM514 299v3h1v-3zM514 305v3h1v-3zM514 311v3h1v-3zM514 317v3h1v-3zM514 323v3h1v-3zM514 329v3h1v-3zM514 335v3h1v-3zM514 341v3h1v-3zM514 347v3h1v-3zM514 353v3h1v-3zM514 359v3h1v-3zM514 365v3h1v-3zM514 371v3h1v-3zM514 377v3h1v-3zM514 383v3h1v-3zM514 389v3h1v-3zM514 395v3h1v-3zM514 401v3h1v-3zM514 407v3h1v-3zM514 413v3h1v-3z" fill="#f4f4f4"/>
<path d="M11 471h3v1h-3zM17 471h3v1h-3zM23 471h3v1h-3zM29 471h3v1h-3zM35 471h3v1h-3zM41 471h3v1h-3zM47 471h3v1h-3zM53 471h3v1h-3zM59 471h3v1h-3zM65 471h3v1h-3zM71 471h3v1h-3zM77 471h3v1h-3zM83 471h3v1h-3zM89 471h3v1h-3zM95 471h3v1h-3zM101 471h3v1h-3zM107 471h3v1h-3zM113 471h3v1h-3zM119 471h3v1h-3zM125 471h3v1h-3zM131 471h3v1h-3zM137 471h3v1h-3zM143 471h3v1h-3zM149 471h3v1h-3zM155 471h3v1h-3zM161 471h3v1h-3zM167 471h3v1h-3zM173 471h3v1h-3zM179 471h3v1h-3zM185 471h3v1h-3zM191 471h3v1h-3zM197 471h3v1h-3zM203 471h3v1h-3zM209 471h3v1h-3zM215 471h3v1h-3zM221 471h3v1h-3zM227 471h3v1h-3zM233 471h3v1h-3zM239 471h3v1h-3zM245 471h3v1h-3zM251 471h3v1h-3zM257 471h3v1h-3zM263 471h3v1h-3zM269 471h3v1h-3zM275 471h3v1h-3zM281 471h3v1h-3zM287 471h3v1h-3zM293 471h3v1h-3zM299 471h3v1h-3zM305 471h3v1h-3zM311 471h3v1h-3zM317 471h3v1h-3zM323 471h3v1h-3zM329 471h3v1h-3zM335 471h3v1h-3zM341 471h3v1h-3zM347 471h3v1h-3zM353 471h3v1h-3zM359 471h3v1h-3zM365 471h3v1h-3zM371 471h3v1h-3zM377 471h3v1h-3zM383 471h3v1h-3zM389 471h3v1h-3zM395 471h3v1h-3zM401 471h3v1h-3zM407 471h3v1h-3zM413 471h3v1h-3zM419 471h3v1h-3zM425 471h3v1h-3zM431 471h3v1h-3zM437 471h3v1h-3zM443 471h3v1h-3zM449 471h3v1h-3zM455 471h3v1h-3zM461 471h3v1h-3zM467 471h3v1h-3zM473 471h3v1h-3zM479 471h3v1h-3zM485 471h3v1h-3zM491 471h3v1h-3zM497 471h3v1h-3zM503 471h3v1h-3zM509 471h3v1h-3zM515 471h3v1h-3zM521 471h3v1h-3zM527 471h3v1h-3zM533 471h3v1h-3zM539 471h3v1h-3zM545 471h3v1h-3zM551 471h3v1h-3zM557 471h3v1h-3zM563 471h3v1h-3zM569 471h3v1h-3zM575 471h3v1h-3zM581 471h3v1h-3zM587 471h3v1h-3zM593 471h3v1h-3zM599 471h3v1h-3zM605 471h3v1h-3zM611 471h3v1h-3zM617 471h3v1h-3zM623 471h3v1h-3zM629 471h3v1h-3zM635 471h3v1h-3zM641 471h3v1h-3zM647 471h3v1h-3zM653 471h3v1h-3zM659 471h3v1h-3zM665 471h3v1h-3zM671 471h3v1h-3zM677 471h1v1h-1z" fill="#778899"/>
<path d="M42 425v3h1v-3zM42 431v3h1v-3zM42 437v3h1v-3zM42 443v3h1v-3zM42 449v3h1v-3zM42 455v3h1v-3zM42 461v3h1v-3zM42 467v3h1v-3zM42 473v3h1v-3zM42 479v3h1v-3zM42 485v3h1v-3zM42 491v3h1v-3zM42 497v3h1v-3zM42 503v3h1v-3zM42 509v3h1v-3zM42 515v3h1v-3zM42 521v3h1v-3zM42 527v3h1v-3zM42 533v3h1v-3zM42 539v3h1v-3zM42 545v3h1v-3zM42 551v2h1v-2z" fill="#778899"/>
<path d="M74 425v3h1v-3zM74 431v3h1v-3zM74 437v3h1v-3zM74 443v3h1v-3zM74 449v3h1v-3zM74 455v3h1v-3zM74 461v3h1v-3zM74 467v3h1v-3zM74 473v3h1v-3zM74 479v3h1v-3zM74 485v3h1v-3zM74 491v3h1v-3zM74 497v3h1v-3zM74 503v3h1v-3zM74 509v3h1v-3zM74 515v3h1v-3zM74 521v3h1v-3zM74 527v3h1v-3zM74 533v3h1v-3zM74 539v3h1v-3zM74 545v3h1v-3zM74 551v2h1v-2z" fill="#778899"/>
<path d="M106 425v3h1v-3zM106 431v3h1v-3zM106 437v3h1v-3zM106 443v3h1v-3zM106 449v3h1v-3zM106 455v3h1v-3zM106 461v3h1v-3zM106 467v3h1v-3zM106 473v3h1v-3zM106 479v3h1v-3zM106 485v3h1v-3zM106 491v3h1v-3zM106 497v3h1v-3zM106 503v3h1v-3zM106 509v3h1v-3zM106 515v3h1v-3zM106 521v3h1v-3zM106 527v3h1v-3zM106 533v3h1v-3zM106 539v3h1v-3zM106 545v3h1v-3zM106 551v2h1v-2z" fill="#778899"/>
<path d="M138 425v3h1v-3zM138 431v3h1v-3zM138 437v3h1v-3zM138 443v3h1v-3zM138 449v3h1v-3zM138 455v3h1v-3zM138 461v3h1v-3zM138 467v3h1v-3zM138 473v3h1v-3zM138 479v3h1v-3zM138 485v3h1v-3zM138 491v3h1v-3zM138 497v3h1v-3zM138 503v3h1v-3zM138 509v3h1v-3zM138 515v3h1v-3zM138 521v3h1v-3zM138 527v3h1v-3zM138 533v3h1v-3zM138 539v3h1v-3zM138 545v3h1v-3zM138 551v2h1v-2z" fill="#778899"/>
<path d="M170 425v3h1v-3zM170 431v3h1v-3zM170 437v3h1v-3zM170 443v3h1v-3zM170 449v3h1v-3zM170 455v3h1v-3zM170 461v3h1v-3zM170 467v3h1v-3zM170 473v3h1v-3zM170 479v3h1v-3zM170 485v3h1v-3zM170 491v3h1v-3zM170 497v3h1v-3zM170 503v3h1v-3zM170 509v3h1v-3zM170 515v3h1v-3zM170 521v3h1v-3zM170 527v3h1v-3zM170 533v3h1v-3zM170 539v3h1v-3zM170 545v3h1v-3zM170 551v2h1v-2z" fill="#778899"/>
<path d="M202 425v3h1v-3zM202 431v3h1v-3zM202 437v3h1v-3zM202 443v3h1v-3zM202 449v3h1v-3zM202 455v3h1v-3zM202 461v3h1v-3zM202 467v3h1v-3zM202 473v3h1v-3zM202 479v3h1v-3zM202 485v3h1v-3zM202 491v3h1v-3zM202 497v3h1v-3zM202 503v3h1v-3zM202 509v3h1v-3zM202 515v3h1v-3zM202 521v3h1v-3zM202 527v3h1v-3zM202 533v3h1v-3zM202 539v3h1v-3zM202 545v3h1v-3zM202 551v2h1v-2z" fill="#778899"/>
<path d="M234 425v3h1v-3zM234 431v3h1v-3zM234 437v3h1v-3zM234 443v3h1v-3zM234 449v3h1v-3zM234 455v3h1v-3zM234 461v3h1v-3zM234 467v3h1v-3zM234 473v3h1v-3zM234 479v3h1v-3zM234 485v3h1v-3zM234 491v3h1v-3zM234 497v3h1v-3zM234 503v3h1v-3zM234 509v3h1v-3zM234 515v3h1v-3zM234 521v3h1v-3zM234 527v3h1v-3zM234 533v3h1v-3zM234 539v3h1v-3zM234 545v3h1v-3zM234 551v2h1v-2z" fill="#778899"/>
<path d="M266 425v3h1v-3zM266 431v3h1v-3zM266 437v3h1v-3zM266 443v3h1v-3zM266 449v3h1v-3zM266 455v3h1v-3zM266 461v3h1v-3zM266 467v3h1v-3zM266 473v3h1v-3zM266 479v3h1v-3zM266 485v3h1v-3zM266 491v3h1v-3zM266 497v3h1v-3zM266 503v3h1v-3zM266 509v3h1v-3zM266 515v3h1v-3zM266 521v3h1v-3zM266 527v3h1v-3zM266 533v3h1v-3zM266 539v3h1v-3zM266 545v3h1v-3zM266 551v2h1v-2z" fill="#778899"/>
<path d="M298 425v3h1v-3zM298 431v3h1v-3zM298 437v3h1v-3zM298 443v3h1v-3zM298 449v3h1v-3zM298 455v3h1v-3zM298 461v3h1v-3zM298 467v3h1v-3zM298 473v3h1v-3zM298 479v3h1v-3zM298 485v3h1v-3zM298 491v3h1v-3zM298 497v3h1v-3zM298 503v3h1v-3zM298 509v3h1v-3zM298 515v3h1v-3zM298 521v3h1v-3zM298 527v3h1v-3zM298 533v3h1v-3zM298 539v3h1v-3zM298 545v3h1v-3zM298 551v2h1v-2z" fill="#778899"/>
<path d="M330 425v3h1v-3zM330 431v3h1v-3zM330 437v3h1v-3zM330 443v3h1v-3zM330 449v3h1v-3zM330 455v3h1v-3zM330 461v3h1v-3zM330 467v3h1v-3zM330 473v3h1v-3zM330 479v3h1v-3zM330 485v3h1v-3zM330 491v3h1v-3zM330 497v3h1v-3zM330 503v3h1v-3zM330 509v3h1v-3zM330 515v3h1v-3zM330 521v3h1v-3zM330 527v3h1v-3zM330 533v3h1v-3zM330 539v3h1v-3zM330 545v3h1v-3zM330 551v2h1v-2z" fill="#778899"/>
<path d="M362 425v3h1v-3zM362 431v3h1v-3zM362 437v3h1v-3zM362 443v3h1v-3zM362 449v3h1v-3zM362 455v3h1v-3zM362 461v3h1v-3zM362 467v3h1v-3zM362 473v3h1v-3zM362 479v3h1v-3zM362 485v3h1v-3zM362 491v3h1v-3zM362 497v3h1v-3zM362 503v3h1v-3zM362 509v3h1v-3zM362 515v3h1v-3zM362 521v3h1v-3zM362 527v3h1v-3zM362 533v3h1v-3zM362 539v3h1v-3zM362 545v3h1v-3zM362 551v2h1v-2z" fill="#778899"/>
<path d="M394 425v3h1v-3zM394 431v3h1v-3zM394 437v3h1v-3zM394 443v3h1v-3zM394 449v3h1v-3zM394 455v3h1v-3zM394 461v3h1v-3zM394 467v3h1v-3zM394 473v3h1v-3zM394 479v3h1v-3zM394 485v3h1v-3zM394 491v3h1v-3zM394 497v3h1v-3zM394 503v3h1v-3zM394 509v3h1v-3zM394 515v3h1v-3zM394 521v3h1v-3zM394 527v3h1v-3zM394 533v3h1v-3zM394 539v3h1v-3zM394 545v3h1v-3zM394 551v2h1v-2z" fill="#778899"/>
<path d="M426 425v3h1v-3zM426 431v3h1v-3zM426 437v3h1v-3zM426 443v3h1v-3zM426 449v3h1v-3zM426 455v3h1v-3zM426 461v3h1v-3zM426 467v3h1v-3zM426 473v3h1v-3zM426 479v3h1v-3zM426 485v3h1v-3zM426 491v3h1v-3zM426 497v3h1v-3zM426 503v3h1v-3zM426 509v3h1v-3zM426 515v3h1v-3zM426 521v3h1v-3zM426 527v3h1v-3zM426 533v3h1v-3zM426 539v3h1v-3zM426 545v3h1v-3zM426 551v2h1v-2z" fill="#778899"/>
<path d="M458 425v3h1v-3zM458 431v3h1v-3zM458 437v3h1v-3zM458 443v3h1v-3zM458 449v3h1v-3zM458 455v3h1v-3zM458 461v3h1v-3zM458 467v3h1v-3zM458 473v3h1v-3zM458 479v3h1v-3zM458 485v3h1v-3zM458 491v3h1v-3zM458 497v3h1v-3zM458 503v3h1v-3zM458 509v3h1v-3zM458 515v3h1v-3zM458 521v3h1v-3zM458 527v3h1v-3zM458 533v3h1v-3zM458 539v3h1v-3zM458 545v3h1v-3zM458 551v2h1v-2z" fill="#778899"/>
<path d="M490 425v3h1v-3zM490 431v3h1v-3zM490 437v3h1v-3zM490 443v3h1v-3zM490 449v3h1v-3zM490 455v3h1v-3zM490 461v3h1v-3zM490 467v3h1v-3zM490 473v3h1v-3zM490 479v3h1v-3zM490 485v3h1v-3zM490 491v3h1v-3zM490 497v3h1v-3zM490 503v3h1v-3zM490 509v3h1v-3zM490 515v3h1v-3zM490 521v3h1v-3zM490 527v3h1v-3zM490 533v3h1v-3zM490 539v3h1v-3zM490 545v3h1v-3zM490 551v2h1v-2z" fill="#778899"/>
<path d="M522 425v3h1v-3zM522 431v3h1v-3zM522 437v3h1v-3zM522 443v3h1v-3zM522 449v3h1v-3zM522 455v3h1v-3zM522 461v3h1v-3zM522 467v3h1v-3zM522 473v3h1v-3zM522 479v3h1v-3zM522 485v3h1v-3zM522 491v3h1v-3zM522 497v3h1v-3zM522 503v3h1v-3zM522 509v3h1v-3zM522 515v3h1v-3zM522 521v3h1v-3zM522 527v3h1v-3zM522 533v3h1v-3zM522 539v3h1v-3zM522 545v3h1v-3zM522 551v2h1v-2z" fill="#778899"/>
<path d="M554 425v3h1v-3zM554 431v3h1v-3zM554 437v3h1v-3zM554 443v3h1v-3zM554 449v3h1v-3zM554 455v3h1v-3zM554 461v3h1v-3zM554 467v3h1v-3zM554 473v3h1v-3zM554 479v3h1v-3zM554 485v3h1v-3zM554 491v3h1v-3zM554 497v3h1v-3zM554 503v3h1v-3zM554 509v3h1v-3zM554 515v3h1v-3zM554 521v3h1v-3zM554 527v3h1v-3zM554 533v3h1v-3zM554 539v3h1v-3zM554 545v3h1v-3zM554 551v2h1v-2z" fill="#778899"/>
<path d="M586 425v3h1v-3zM586 431v3h1v-3zM586 437v3h1v-3zM586 443v3h1v-3zM586 449v3h1v-3zM586 455v3h1v-3zM586 461v3h1v-3zM586 467v3h1v-3zM586 473v3h1v-3zM586 479v3h1v-3zM586 485v3h1v-3zM586 491v3h1v-3zM586 497v3h1v-3zM586 503v3h1v-3zM586 509v3h1v-3zM586 515v3h1v-3zM586 521v3h1v-3zM586 527v3h1v-3zM586 533v3h1v-3zM586 539v3h1v-3zM586 545v3h1v-3zM586 551v2h1v-2z" fill="#778899"/>
<path d="M618 425v3h1v-3zM618 431v3h1v-3zM618 437v3h1v-3zM618 443v3h1v-3zM618 449v3h1v-3zM618 455v3h1v-3zM618 461v3h1v-3zM618 467v3h1v-3zM618 473v3h1v-3zM618 479v3h1v-3zM618 485v3h1v-3zM618 491v3h1v-3zM618 497v3h1v-3zM618 503v3h1v-3zM618 509v3h1v-3zM618 515v3h1v-3zM618 521v3h1v-3zM618 527v3h1v-3zM618 533v3h1v-3zM618 539v3h1v-3zM618 545v3h1v-3zM618 551v2h1v-2z" fill="#778899"/>
<path d="M650 425v3h1v-3zM650 431v3h1v-3zM650 437v3h1v-3zM650 443v3h1v-3zM650 449v3h1v-3zM650 455v3h1v-3zM650 461v3h1v-3zM650 467v3h1v-3zM650 473v3h1v-3zM650 479v3h1v-3zM650 485v3h1v-3zM650 491v3h1v-3zM650 497v3h1v-3zM650 503v3h1v-3zM650 509v3h1v-3zM650 515v3h1v-3zM650 521v3h1v-3zM650 527v3h1v-3zM650 533v3h1v-3zM650 539v3h1v-3zM650 545v3h1v-3zM650 551v2h1v-2z" fill="#778899"/>
<path d="M130 425v3h1v-3zM130 431v3h1v-3zM130 437v3h1v-3zM130 443v3h1v-3zM130 449v3h1v-3zM130 455v3h1v-3zM130 461v3h1v-3zM130 467v3h1v-3zM130 473v3h1v-3zM130 479v3h1v-3zM130 485v3h1v-3zM130 491v3h1v-3zM130 497v3h1v-3zM130 503v3h1v-3zM130 509v3h1v-3zM130 515v3h1v-3zM130 521v3h1v-3zM130 527v3h1v-3zM130 533v3h1v-3zM130 539v3h1v-3zM130 545v3h1v-3zM130 551v2h1v-2z" fill="#f4f4f4"/>
<path d="M322 425v3h1v-3zM322 431v3h1v-3zM322 437v3h1v-3zM322 443v3h1v-3zM322 449v3h1v-3zM322 455v3h1v-3zM322 461v3h1v-3zM322 467v3h1v-3zM322 473v3h1v-3zM322 479v3h1v-3zM322 485v3h1v-3zM322 491v3h1v-3zM322 497v3h1v-3zM322 503v3h1v-3zM322 509v3h1v-3zM322 515v3h1v-3zM322 521v3h1v-3zM322 527v3h1v-3zM322 533v3h1v-3zM322 539v3h1v-3zM322 545v3h1v-3zM322 551v2h1v-2z" fill="#f4f4f4"/>
<path d="M514 425v3h1v-3zM514 431v3h1v-3zM514 437v3h1v-3zM514 443v3h1v-3zM514 449v3h1v-3zM514 455v3h1v-3zM514 461v3h1v-3zM514 467v3h1v-3zM514 473v3h1v-3zM514 479v3h1v-3zM514 485v3h1v-3zM514 491v3h1v-3zM514 497v3h1v-3zM514 503v3h1v-3zM514 509v3h1v-3zM514 515v3h1v-3zM514 521v3h1v-3zM514 527v3h1v-3zM514 533v3h1v-3zM514 539v3h1v-3zM514 545v3h1v-3zM514 551v2h1v-2z" fill="#f4f4f4"/>
<g>
<rect x="10" y="110" width="1" height="36" fill="#00ff00"/>
<rect x="8" y="114" width="5" height="32" fill="#00ff00"/>
<rect x="9" y="115" width="3" height="30" fill="#fff"/>
<rect x="18" y="131" width="1" height="22" fill="#00ff00"/>
<rect x="16" y="133" width="5" height="13" fill="#00ff00"/>
<rect x="17" y="134" width="3" height="11" fill="#000"/>
<rect x="26" y="117" width="1" height="18" fill="#00ff00"/>
<rect x="24" y="126" width="5" height="8" fill="#00ff00"/>
<rect x="25" y="127" width="3" height="6" fill="#000"/>
<rect x="34" y="120" width="1" height="18" fill="#00ff00"/>
<rect x="32" y="127" width="5" height="2" fill="#00ff00"/>
<rect x="42" y="128" width="1" height="14" fill="#00ff00"/>
<rect x="40" y="128" width="5" height="3" fill="#00ff00"/>
<rect x="41" y="129" width="3" height="1" fill="#fff"/>
<rect x="50" y="125" width="1" height="46" fill="#00ff00"/>
<rect x="48" y="130" width="5" height="25" fill="#00ff00"/>
<rect x="49" y="131" width="3" height="23" fill="#fff"/>
<rect x="58" y="149" width="1" height="26" fill="#00ff00"/>
<rect x="56" y="153" width="5" height="12" fill="#00ff00"/>
<rect x="57" y="154" width="3" height="10" fill="#fff"/>
<rect x="66" y="157" width="1" height="26" fill="#00ff00"/>
<rect x="64" y="160" width="5" height="5" fill="#00ff00"/>
<rect x="65" y="161" width="3" height="3" fill="#000"/>
<rect x="74" y="151" width="1" height="45" fill="#00ff00"/>
<rect x="72" y="159" width="5" height="29" fill="#00ff00"/>
<rect x="73" y="160" width="3" height="27" fill="#fff"/>
<rect x="82" y="183" width="1" height="22" fill="#00ff00"/>
<rect x="80" y="188" width="5" height="10" fill="#00ff00"/>
<rect x="81" y="189" width="3" height="8" fill="#fff"/>
<rect x="90" y="192" width="1" height="14" fill="#00ff00"/>
<rect x="88" y="196" width="5" height="2" fill="#00ff00"/>
<rect x="98" y="182" width="1" height="17" fill="#00ff00"/>
<rect x="96" y="185" width="5" height="12" fill="#00ff00"/>
<rect x="97" y="186" width="3" height="10" fill="#000"/>
<rect x="106" y="183" width="1" height="14" fill="#00ff00"/>
<rect x="104" y="185" width="5" height="11" fill="#00ff00"/>
<rect x="105" y="186" width="3" height="9" fill="#fff"/>
<rect x="114" y="184" width="1" height="16" fill="#00ff00"/>
<rect x="112" y="184" width="5" height="12" fill="#00ff00"/>
<rect x="113" y="185" width="3" height="10" fill="#000"/>
<rect x="122" y="179" width="1" height="11" fill="#00ff00"/>
<rect x="120" y="180" width="5" height="6" fill="#00ff00"/>
<rect x="121" y="181" width="3" height="4" fill="#000"/>
<rect x="130" y="176" width="1" height="11" fill="#00ff00"/>
<rect x="128" y="179" width="5" height="4" fill="#00ff00"/>
<rect x="129" y="180" width="3" height="2" fill="#000"/>
<rect x="138" y="171" width="1" height="20" fill="#00ff00"/>
<rect x="136" y="178" width="5" height="11" fill="#00ff00"/>
<rect x="137" y="179" width="3" height="9" fill="#fff"/>
<rect x="146" y="179" width="1" height="41" fill="#00ff00"/>
<rect x="144" y="188" width="5" height="30" fill="#00ff00"/>
<rect x="145" y="189" width="3" height="28" fill="#fff"/>
<rect x="154" y="201" width="1" height="35" fill="#00ff00"/>
<rect x="152" y="217" width="5" height="13" fill="#00ff00"/>
<rect x="153" y="218" width="3" height="11" fill="#fff"/>
<rect x="162" y="221" width="1" height="24" fill="#00ff00"/>
<rect x="160" y="228" width="5" height="5" fill="#00ff00"/>
<rect x="161" y="229" width="3" height="3" fill="#fff"/>
<rect x="170" y="230" width="1" height="30" fill="#00ff00"/>
<rect x="168" y="232" width="5" height="15" fill="#00ff00"/>
<rect x="169" y="233" width="3" height="13" fill="#fff"/>
<rect x="178" y="229" width="1" height="18" fill="#00ff00"/>
<rect x="176" y="243" width="5" height="4" fill="#00ff00"/>
<rect x="177" y="244" width="3" height="2" fill="#000"/>
<rect x="186" y="243" width="1" height="14" fill="#00ff00"/>
<rect x="184" y="243" width="5" height="4" fill="#00ff00"/>
<rect x="185" y="244" width="3" height="2" fill="#fff"/>
<rect x="194" y="235" width="1" height="18" fill="#00ff00"/>
<rect x="192" y="238" width="5" height="9" fill="#00ff00"/>
<rect x="193" y="239" width="3" height="7" fill="#000"/>
<rect x="202" y="223" width="1" height="26" fill="#00ff00"/>
<rect x="200" y="235" width="5" height="3" fill="#00ff00"/>
<rect x="201" y="236" width="3" height="1" fill="#000"/>
<rect x="210" y="228" width="1" height="23" fill="#00ff00"/>
<rect x="208" y="229" width="5" height="7" fill="#00ff00"/>
<rect x="209" y="230" width="3" height="5" fill="#000"/>
<rect x="218" y="215" width="1" height="20" fill="#00ff00"/>
<rect x="216" y="218" width="5" height="12" fill="#00ff00"/>
<rect x="217" y="219" width="3" height="10" fill="#000"/>
<rect x="226" y="206" width="1" height="19" fill="#00ff00"/>
<rect x="224" y="218" width="5" height="4" fill="#00ff00"/>
<rect x="225" y="219" width="3" height="2" fill="#fff"/>
<rect x="234" y="207" width="1" height="18" fill="#00ff00"/>
<rect x="232" y="222" width="5" height="1" fill="#00ff00"/>
<rect x="242" y="219" width="1" height="35" fill="#00ff00"/>
<rect x="240" y="222" width="5" height="27" fill="#00ff00"/>
<rect x="241" y="223" width="3" height="25" fill="#fff"/>
<rect x="250" y="240" width="1" height="43" fill="#00ff00"/>
<rect x="248" y="248" width="5" height="21" fill="#00ff00"/>
<rect x="249" y="249" width="3" height="19" fill="#fff"/>
<rect x="258" y="235" width="1" height="45" fill="#00ff00"/>
<rect x="256" y="249" width="5" height="20" fill="#00ff00"/>
<rect x="257" y="250" width="3" height="18" fill="#000"/>
<rect x="266" y="222" width="1" height="37" fill="#00ff00"/>
<rect x="264" y="236" width="5" height="13" fill="#00ff00"/>
<rect x="265" y="237" width="3" height="11" fill="#000"/>
<rect x="274" y="211" width="1" height="34" fill="#00ff00"/>
<rect x="272" y="219" width="5" height="18" fill="#00ff00"/>
<rect x="273" y="220" width="3" height="16" fill="#000"/>
<rect x="282" y="184" width="1" height="37" fill="#00ff00"/>
<rect x="280" y="186" width="5" height="35" fill="#00ff00"/>
<rect x="281" y="187" width="3" height="33" fill="#000"/>
<rect x="290" y="184" width="1" height="20" fill="#00ff00"/>
<rect x="288" y="187" width="5" height="1" fill="#00ff00"/>
<rect x="298" y="182" width="1" height="10" fill="#00ff00"/>
<rect x="296" y="184" width="5" height="5" fill="#00ff00"/>
<rect x="297" y="185" width="3" height="3" fill="#000"/>
<rect x="306" y="175" width="1" height="15" fill="#00ff00"/>
<rect x="304" y="177" width="5" height="8" fill="#00ff00"/>
<rect x="305" y="178" width="3" height="6" fill="#000"/>
<rect x="314" y="166" width="1" height="13" fill="#00ff00"/>
<rect x="312" y="176" width="5" height="3" fill="#00ff00"/>
<rect x="313" y="177" width="3" height="1" fill="#000"/>
<rect x="322" y="168" width="1" height="22" fill="#00ff00"/>
<rect x="320" y="174" width="5" height="15" fill="#00ff00"/>
<rect x="321" y="175" width="3" height="13" fill="#000"/>
<rect x="330" y="154" width="1" height="22" fill="#00ff00"/>
<rect x="328" y="160" width="5" height="15" fill="#00ff00"/>
<rect x="329" y="161" width="3" height="13" fill="#000"/>
<rect x="338" y="142" width="1" height="23" fill="#00ff00"/>
<rect x="336" y="156" width="5" height="4" fill="#00ff00"/>
<rect x="337" y="157" width="3" height="2" fill="#000"/>
<rect x="346" y="129" width="1" height="36" fill="#00ff00"/>
<rect x="344" y="136" width="5" height="22" fill="#00ff00"/>
<rect x="345" y="137" width="3" height="20" fill="#000"/>
<rect x="354" y="134" width="1" height="16" fill="#00ff00"/>
<rect x="352" y="135" width="5" height="10" fill="#00ff00"/>
<rect x="353" y="136" width="3" height="8" fill="#fff"/>
<rect x="362" y="139" width="1" height="9" fill="#00ff00"/>
<rect x="360" y="142" width="5" height="3" fill="#00ff00"/>
<rect x="361" y="143" width="3" height="1" fill="#fff"/>
<rect x="370" y="140" width="1" height="8" fill="#00ff00"/>
<rect x="368" y="142" width="5" height="4" fill="#00ff00"/>
<rect x="369" y="143" width="3" height="2" fill="#fff"/>
<rect x="378" y="132" width="1" height="14" fill="#00ff00"/>
<rect x="376" y="133" width="5" height="13" fill="#00ff00"/>
<rect x="377" y="134" width="3" height="11" fill="#000"/>
<rect x="386" y="124" width="1" height="16" fill="#00ff00"/>
<rect x="384" y="130" width="5" height="5" fill="#00ff00"/>
<rect x="385" y="131" width="3" height="3" fill="#000"/>
<rect x="394" y="130" width="1" height="18" fill="#00ff00"/>
<rect x="392" y="130" width="5" height="17" fill="#00ff00"/>
<rect x="393" y="131" width="3" height="15" fill="#fff"/>
<rect x="402" y="145" width="1" height="16" fill="#00ff00"/>
<rect x="400" y="146" width="5" height="1" fill="#00ff00"/>
<rect x="410" y="127" width="1" height="23" fill="#00ff00"/>
<rect x="408" y="131" width="5" height="17" fill="#00ff00"/>
<rect x="409" y="132" width="3" height="15" fill="#000"/>
<rect x="418" y="129" width="1" height="11" fill="#00ff00"/>
<rect x="416" y="131" width="5" height="8" fill="#00ff00"/>
<rect x="417" y="132" width="3" height="6" fill="#fff"/>
<rect x="426" y="125" width="1" height="16" fill="#00ff00"/>
<rect x="424" y="135" width="5" height="5" fill="#00ff00"/>
<rect x="425" y="136" width="3" height="3" fill="#000"/>
<rect x="434" y="118" width="1" height="22" fill="#00ff00"/>
<rect x="432" y="119" width="5" height="16" fill="#00ff00"/>
<rect x="433" y="120" width="3" height="14" fill="#000"/>
<rect x="442" y="117" width="1" height="13" fill="#00ff00"/>
<rect x="440" y="119" width="5" height="9" fill="#00ff00"/>
<rect x="441" y="120" width="3" height="7" fill="#fff"/>
<rect x="450" y="122" width="1" height="8" fill="#00ff00"/>
<rect x="448" y="126" width="5" height="1" fill="#00ff00"/>
<rect x="458" y="109" width="1" height="20" fill="#00ff00"/>
<rect x="456" y="115" width="5" height="12" fill="#00ff00"/>
<rect x="457" y="116" width="3" height="10" fill="#000"/>
<rect x="466" y="113" width="1" height="13" fill="#00ff00"/>
<rect x="464" y="115" width="5" height="9" fill="#00ff00"/>
<rect x="465" y="116" width="3" height="7" fill="#fff"/>
<rect x="474" y="112" width="1" height="14" fill="#00ff00"/>
<rect x="472" y="114" width="5" height="10" fill="#00ff00"/>
<rect x="473" y="115" width="3" height="8" fill="#000"/>
<rect x="482" y="112" width="1" height="8" fill="#00ff00"/>
<rect x="480" y="115" width="5" height="3" fill="#00ff00"/>
<rect x="481" y="116" width="3" height="1" fill="#fff"/>
<rect x="490" y="116" width="1" height="6" fill="#00ff00"/>
<rect x="488" y="117" width="5" height="3" fill="#00ff00"/>
<rect x="489" y="118" width="3" height="1" fill="#fff"/>
<rect x="498" y="114" width="1" height="6" fill="#00ff00"/>
<rect x="496" y="114" width="5" height="6" fill="#00ff00"/>
<rect x="497" y="115" width="3" height="4" fill="#000"/>
<rect x="506" y="115" width="1" height="5" fill="#00ff00"/>
<rect x="504" y="115" width="5" height="2" fill="#00ff00"/>
<rect x="514" y="111" width="1" height="12" fill="#00ff00"/>
<rect x="512" y="117" width="5" height="3" fill="#00ff00"/>
<rect x="513" y="118" width="3" height="1" fill="#fff"/>
<rect x="522" y="112" width="1" height="11" fill="#00ff00"/>
<rect x="520" y="118" width="5" height="4" fill="#00ff00"/>
<rect x="521" y="119" width="3" height="2" fill="#fff"/>
<rect x="530" y="117" width="1" height="23" fill="#00ff00"/>
<rect x="528" y="121" width="5" height="7" fill="#00ff00"/>
<rect x="529" y="122" width="3" height="5" fill="#fff"/>
<rect x="538" y="121" width="1" height="16" fill="#00ff00"/>
<rect x="536" y="127" width="5" height="9" fill="#00ff00"/>
<rect x="537" y="128" width="3" height="7" fill="#fff"/>
<rect x="546" y="82" width="1" height="56" fill="#00ff00"/>
<rect x="544" y="95" width="5" height="43" fill="#00ff00"/>
<rect x="545" y="96" width="3" height="41" fill="#000"/>
<rect x="554" y="48" width="1" height="55" fill="#00ff00"/>
<rect x="552" y="61" width="5" height="34" fill="#00ff00"/>
<rect x="553" y="62" width="3" height="32" fill="#000"/>
<rect x="562" y="57" width="1" height="29" fill="#00ff00"/>
<rect x="560" y="61" width="5" height="19" fill="#00ff00"/>
<rect x="561" y="62" width="3" height="17" fill="#fff"/>
<rect x="570" y="73" width="1" height="22" fill="#00ff00"/>
<rect x="568" y="80" width="5" height="6" fill="#00ff00"/>
<rect x="569" y="81" width="3" height="4" fill="#fff"/>
<rect x="578" y="67" width="1" height="23" fill="#00ff00"/>
<rect x="576" y="77" width="5" height="9" fill="#00ff00"/>
<rect x="577" y="78" width="3" height="7" fill="#000"/>
<rect x="586" y="59" width="1" height="34" fill="#00ff00"/>
<rect x="584" y="76" width="5" height="2" fill="#00ff00"/>
<rect x="594" y="72" width="1" height="36" fill="#00ff00"/>
<rect x="592" y="77" width="5" height="25" fill="#00ff00"/>
<rect x="593" y="78" width="3" height="23" fill="#fff"/>
<rect x="602" y="99" width="1" height="31" fill="#00ff00"/>
<rect x="600" y="100" width="5" height="8" fill="#00ff00"/>
<rect x="601" y="101" width="3" height="6" fill="#fff"/>
<rect x="610" y="94" width="1" height="27" fill="#00ff00"/>
<rect x="608" y="95" width="5" height="13" fill="#00ff00"/>
<rect x="609" y="96" width="3" height="11" fill="#000"/>
<rect x="618" y="94" width="1" height="16" fill="#00ff00"/>
<rect x="616" y="95" width="5" height="10" fill="#00ff00"/>
<rect x="617" y="96" width="3" height="8" fill="#fff"/>
<rect x="626" y="101" width="1" height="24" fill="#00ff00"/>
<rect x="624" y="104" width="5" height="9" fill="#00ff00"/>
<rect x="625" y="105" width="3" height="7" fill="#fff"/>
<rect x="634" y="97" width="1" height="31" fill="#00ff00"/>
<rect x="632" y="112" width="5" height="2" fill="#00ff00"/>
<rect x="642" y="101" width="1" height="39" fill="#00ff00"/>
<rect x="640" y="113" width="5" height="16" fill="#00ff00"/>
<rect x="641" y="114" width="3" height="14" fill="#fff"/>
<rect x="650" y="104" width="1" height="30" fill="#00ff00"/>
<rect x="648" y="124" width="5" height="5" fill="#00ff00"/>
<rect x="649" y="125" width="3" height="3" fill="#000"/>
<rect x="658" y="110" width="1" height="19" fill="#00ff00"/>
<rect x="656" y="117" width="5" height="8" fill="#00ff00"/>
<rect x="657" y="118" width="3" height="6" fill="#000"/>
<rect x="666" y="111" width="1" height="15" fill="#00ff00"/>
<rect x="664" y="117" width="5" height="2" fill="#00ff00"/>
<rect x="674" y="111" width="1" height="11" fill="#00ff00"/>
<rect x="672" y="115" width="5" height="4" fill="#00ff00"/>
<rect x="673" y="116" width="3" height="2" fill="#000"/>
</g>
<polygon points="273.30,246.00 274.80,250.60 279.54,249.60 276.30,253.20 279.54,256.80 274.80,255.80 273.30,260.40 271.80,255.80 267.06,256.80 270.30,253.20 267.06,249.60 271.80,250.60" fill="#84caf4" shape-rendering="auto"/>
<polygon points="281.90,230.90 272.10,240.70 272.10,244.00 280.20,235.90 280.20,253.10 283.60,253.10 283.60,235.90 291.70,244.00 291.70,240.70" fill="#84caf4" shape-rendering="auto"/>
<polygon points="417.30,139.20 418.80,143.80 423.54,142.80 420.30,146.40 423.54,150.00 418.80,149.00 417.30,153.60 415.80,149.00 411.06,150.00 414.30,146.40 411.06,142.80 415.80,143.80" fill="#84caf4" shape-rendering="auto"/>
<polygon points="425.90,150.10 416.10,159.90 416.10,163.20 424.20,155.10 424.20,172.30 427.60,172.30 427.60,155.10 435.70,163.20 435.70,159.90" fill="#84caf4" shape-rendering="auto"/>
<polyline points="10.5,402.3 18.5,402.0 26.5,401.0 34.5,401.0 42.5,395.5 50.5,400.0 58.5,401.5 66.5,401.5 74.5,401.5 82.5,410.0 90.5,416.0 98.5,411.0 106.5,405.0 114.5,389.0 122.5,370.0 130.5,346.0 138.5,331.0 146.5,351.0 154.5,376.0 162.5,396.0 170.5,404.8 178.5,411.0 186.5,416.0 194.5,411.0 202.5,401.0 210.5,380.0 218.5,345.0 226.5,323.5 234.5,312.0 242.5,341.0 250.5,366.0 258.5,383.5 266.5,396.0 274.5,378.5 282.5,356.0 290.5,332.0 298.5,317.0 306.5,308.5 314.5,305.0 322.5,304.8 330.5,304.8 338.5,304.8 346.5,304.8 354.5,305.3 362.5,307.3 370.5,311.8 378.5,312.3 386.5,312.3 394.5,336.0 402.5,359.8 410.5,361.0 418.5,354.0 426.5,353.5 434.5,346.0 442.5,336.0 450.5,323.5 458.5,311.5 466.5,313.0 474.5,314.0 482.5,314.8 490.5,322.3 498.5,324.8 506.5,328.5 514.5,348.5 522.5,377.5 530.5,383.5 538.5,410.3 546.5,376.0 554.5,354.8 562.5,338.5 570.5,327.3 578.5,319.8 586.5,318.5 594.5,336.0 602.5,362.3 610.5,392.3 618.5,404.3 626.5,404.8 634.5,409.8 642.5,412.3 650.5,412.3 658.5,410.3 666.5,407.3 674.5,400.5" fill="none" stroke="#ff0000" stroke-width="2" stroke-linejoin="round"/>
<polyline points="10.5,405.5 18.5,405.5 26.5,405.0 34.5,404.0 42.5,402.5 50.5,402.5 58.5,402.5 66.5,402.5 74.5,402.5 82.5,402.5 90.5,402.5 98.5,402.5 106.5,407.0 114.5,408.0 122.5,412.0 130.5,414.0 138.5,414.0 146.5,414.0 154.5,414.0 162.5,414.0 170.5,413.5 178.5,413.5 186.5,413.5 194.5,413.3 202.5,413.0 210.5,412.0 218.5,410.5 226.5,409.0 234.5,408.0 242.5,407.8 250.5,407.8 258.5,407.8 266.5,406.0 274.5,401.5 282.5,392.0 290.5,386.0 298.5,378.0 306.5,367.0 314.5,357.0 322.5,347.0 330.5,338.5 338.5,329.8 346.5,323.5 354.5,318.0 362.5,314.8 370.5,312.8 378.5,311.0 386.5,310.3 394.5,309.8 402.5,309.6 410.5,309.3 418.5,308.5 426.5,308.5 434.5,308.0 442.5,308.0 450.5,308.0 458.5,308.0 466.5,308.0 474.5,308.0 482.5,308.0 490.5,308.0 498.5,308.5 506.5,309.8 514.5,311.0 522.5,312.8 530.5,316.0 538.5,320.5 546.5,320.5 554.5,320.3 562.5,319.0 570.5,318.5 578.5,318.5 586.5,317.8 594.5,317.8 602.5,318.5 610.5,319.3 618.5,320.3 626.5,323.5 634.5,325.3 642.5,334.8 650.5,344.8 658.5,350.5 666.5,353.5 674.5,357.3" fill="none" stroke="#00ffff" stroke-width="2" stroke-linejoin="round"/>
<polyline points="10.5,401.0 18.5,403.0 26.5,405.0 34.5,407.0 42.5,409.0 50.5,410.0 58.5,410.5 66.5,411.0 74.5,411.5 82.5,411.5 90.5,411.5 98.5,411.5 106.5,411.5 114.5,411.7 122.5,411.8 130.5,412.0 138.5,412.3 146.5,412.8 154.5,413.5 162.5,414.0 170.5,415.0 178.5,415.3 186.5,415.6 194.5,415.6 202.5,415.6 210.5,415.6 218.5,415.6 226.5,415.6 234.5,415.6 242.5,415.5 250.5,415.4 258.5,415.2 266.5,414.9 274.5,414.1 282.5,413.0 290.5,411.5 298.5,409.8 306.5,408.0 314.5,406.0 322.5,404.0 330.5,401.5 338.5,398.8 346.5,396.0 354.5,392.3 362.5,389.0 370.5,385.3 378.5,381.0 386.5,376.8 394.5,372.8 402.5,367.3 410.5,361.0 418.5,354.8 426.5,351.0 434.5,344.8 442.5,338.5 450.5,332.8 458.5,327.3 466.5,323.5 474.5,321.0 482.5,318.0 490.5,316.0 498.5,314.8 506.5,313.5 514.5,312.8 522.5,311.7 530.5,310.5 538.5,309.8 546.5,308.5 554.5,307.8 562.5,307.3 570.5,306.8 578.5,306.5 586.5,306.5 594.5,306.5 602.5,306.5 610.5,306.5 618.5,306.5 626.5,306.5 634.5,306.8 642.5,309.0 650.5,310.3 658.5,311.8 666.5,312.8 674.5,312.8" fill="none" stroke="#ffff00" stroke-width="2" stroke-linejoin="round"/>
<g fill="#c0c0c0">
<rect x="9" y="471" width="3" height="60"/>
<rect x="17" y="471" width="3" height="59"/>
<rect x="25" y="471" width="3" height="56"/>
<rect x="33" y="471" width="3" height="53"/>
<rect x="41" y="471" width="3" height="51"/>
<rect x="49" y="471" width="3" height="53"/>
<rect x="57" y="471" width="3" height="55"/>
<rect x="65" y="471" width="3" height="55"/>
<rect x="73" y="471" width="3" height="62"/>
<rect x="81" y="471" width="3" height="67"/>
<rect x="89" y="471" width="3" height="69"/>
<rect x="97" y="471" width="3" height="69"/>
<rect x="105" y="471" width="3" height="70"/>
<rect x="113" y="471" width="3" height="67"/>
<rect x="121" y="471" width="3" height="65"/>
<rect x="129" y="471" width="3" height="62"/>
<rect x="137" y="471" width="3" height="61"/>
<rect x="145" y="471" width="3" height="62"/>
<rect x="153" y="471" width="3" height="66"/>
<rect x="161" y="471" width="3" height="69"/>
<rect x="169" y="471" width="3" height="73"/>
<rect x="177" y="471" width="3" height="74"/>
<rect x="185" y="471" width="3" height="76"/>
<rect x="193" y="471" width="3" height="75"/>
<rect x="201" y="471" width="3" height="73"/>
<rect x="209" y="471" width="3" height="68"/>
<rect x="217" y="471" width="3" height="63"/>
<rect x="225" y="471" width="3" height="57"/>
<rect x="233" y="471" width="3" height="54"/>
<rect x="241" y="471" width="3" height="55"/>
<rect x="249" y="471" width="3" height="59"/>
<rect x="257" y="471" width="3" height="57"/>
<rect x="265" y="471" width="3" height="54"/>
<rect x="273" y="471" width="3" height="46"/>
<rect x="281" y="471" width="3" height="35"/>
<rect x="289" y="471" width="3" height="25"/>
<rect x="297" y="471" width="3" height="17"/>
<rect x="305" y="471" width="3" height="9"/>
<rect x="313" y="471" width="3" height="3"/>
<rect x="321" y="467" width="3" height="5"/>
<rect x="329" y="461" width="3" height="11"/>
<rect x="337" y="455" width="3" height="17"/>
<rect x="345" y="447" width="3" height="25"/>
<rect x="353" y="443" width="3" height="29"/>
<rect x="361" y="439" width="3" height="33"/>
<rect x="369" y="437" width="3" height="35"/>
<rect x="377" y="434" width="3" height="38"/>
<rect x="385" y="431" width="3" height="41"/>
<rect x="393" y="432" width="3" height="40"/>
<rect x="401" y="434" width="3" height="38"/>
<rect x="409" y="434" width="3" height="38"/>
<rect x="417" y="433" width="3" height="39"/>
<rect x="425" y="433" width="3" height="39"/>
<rect x="433" y="432" width="3" height="40"/>
<rect x="441" y="432" width="3" height="40"/>
<rect x="449" y="432" width="3" height="40"/>
<rect x="457" y="432" width="3" height="40"/>
<rect x="465" y="432" width="3" height="40"/>
<rect x="473" y="432" width="3" height="40"/>
<rect x="481" y="432" width="3" height="40"/>
<rect x="489" y="432" width="3" height="40"/>
<rect x="497" y="433" width="3" height="39"/>
<rect x="505" y="436" width="3" height="36"/>
<rect x="513" y="437" width="3" height="35"/>
<rect x="521" y="440" width="3" height="32"/>
<rect x="529" y="443" width="3" height="29"/>
<rect x="537" y="447" width="3" height="25"/>
<rect x="545" y="444" width="3" height="28"/>
<rect x="553" y="435" width="3" height="37"/>
<rect x="561" y="432" width="3" height="40"/>
<rect x="569" y="431" width="3" height="41"/>
<rect x="577" y="429" width="3" height="43"/>
<rect x="585" y="428" width="3" height="44"/>
<rect x="593" y="433" width="3" height="39"/>
<rect x="601" y="437" width="3" height="35"/>
<rect x="609" y="439" width="3" height="33"/>
<rect x="617" y="443" width="3" height="29"/>
<rect x="625" y="448" width="3" height="24"/>
<rect x="633" y="452" width="3" height="20"/>
<rect x="641" y="458" width="3" height="14"/>
<rect x="649" y="462" width="3" height="10"/>
<rect x="657" y="464" width="3" height="8"/>
<rect x="665" y="466" width="3" height="6"/>
<rect x="673" y="467" width="3" height="5"/>
</g>
<polyline points="10.5,535.0 18.5,534.5 26.5,533.0 34.5,531.0 42.5,529.3 50.5,527.5 58.5,526.8 66.5,526.3 74.5,526.8 82.5,528.0 90.5,530.0 98.5,531.3 106.5,532.5 114.5,534.3 122.5,535.0 130.5,535.5 138.5,535.5 146.5,535.5 154.5,535.8 162.5,536.5 170.5,536.8 178.5,537.3 186.5,538.5 194.5,539.0 202.5,539.8 210.5,540.3 218.5,540.3 226.5,539.8 234.5,538.5 242.5,536.5 250.5,534.8 258.5,532.8 266.5,530.3 274.5,527.3 282.5,524.0 290.5,519.8 298.5,514.8 306.5,509.3 314.5,503.5 322.5,496.0 330.5,488.5 338.5,481.0 346.5,473.5 354.5,467.8 362.5,461.0 370.5,455.3 378.5,450.5 386.5,446.0 394.5,442.3 402.5,439.3 410.5,437.3 418.5,435.5 426.5,434.3 434.5,433.0 442.5,433.0 450.5,433.0 458.5,433.0 466.5,433.0 474.5,432.3 482.5,431.8 490.5,431.8 498.5,432.3 506.5,433.5 514.5,434.0 522.5,434.3 530.5,436.5 538.5,437.3 546.5,439.0 554.5,439.0 562.5,439.0 570.5,439.0 578.5,438.0 586.5,437.8 594.5,436.0 602.5,435.3 610.5,434.0 618.5,434.3 626.5,436.5 634.5,438.5 642.5,441.8 650.5,444.8 658.5,448.0 666.5,451.8 674.5,454.8" fill="none" stroke="#ff0000" stroke-width="2" stroke-linejoin="round"/>
<path d="M10 548v5h5z" fill="#8ba0b8" shape-rendering="auto"/>
<rect x="7" y="33" width="2" height="541" fill="#000"/>
<path d="M9 35h671v255h-671z M10 36v253h669v-253z" fill="#fff" fill-rule="evenodd"/>
<path d="M9 291h671v129h-671z M10 292v127h669v-127z" fill="#fff" fill-rule="evenodd"/>
<path d="M9 421h671v133h-671z M10 422v131h669v-131z" fill="#fff" fill-rule="evenodd"/>
<rect x="680" y="55" width="2" height="1" fill="#fff"/>
<text x="685.0" y="58.8" font-size="9.6" fill="#fff" stroke="#fff" stroke-width="0.1" textLength="32.8" lengthAdjust="spacingAndGlyphs" shape-rendering="auto">115.015</text>
<rect x="680" y="88" width="2" height="1" fill="#fff"/>
<text x="685.0" y="91.8" font-size="9.6" fill="#fff" stroke="#fff" stroke-width="0.1" textLength="32.8" lengthAdjust="spacingAndGlyphs" shape-rendering="auto">114.790</text>
<rect x="680" y="121" width="2" height="1" fill="#fff"/>
<text x="685.0" y="124.8" font-size="9.6" fill="#fff" stroke="#fff" stroke-width="0.1" textLength="32.8" lengthAdjust="spacingAndGlyphs" shape-rendering="auto">114.565</text>
<rect x="680" y="154" width="2" height="1" fill="#fff"/>
<text x="685.0" y="157.8" font-size="9.6" fill="#fff" stroke="#fff" stroke-width="0.1" textLength="32.8" lengthAdjust="spacingAndGlyphs" shape-rendering="auto">114.340</text>
<rect x="680" y="187" width="2" height="1" fill="#fff"/>
<text x="685.0" y="190.8" font-size="9.6" fill="#fff" stroke="#fff" stroke-width="0.1" textLength="32.8" lengthAdjust="spacingAndGlyphs" shape-rendering="auto">114.120</text>
<rect x="680" y="220" width="2" height="1" fill="#fff"/>
<text x="685.0" y="223.8" font-size="9.6" fill="#fff" stroke="#fff" stroke-width="0.1" textLength="32.8" lengthAdjust="spacingAndGlyphs" shape-rendering="auto">113.895</text>
<rect x="680" y="253" width="2" height="1" fill="#fff"/>
<text x="685.0" y="256.8" font-size="9.6" fill="#fff" stroke="#fff" stroke-width="0.1" textLength="32.8" lengthAdjust="spacingAndGlyphs" shape-rendering="auto">113.670</text>
<rect x="680" y="286" width="2" height="1" fill="#fff"/>
<text x="685.0" y="289.8" font-size="9.6" fill="#fff" stroke="#fff" stroke-width="0.1" textLength="32.8" lengthAdjust="spacingAndGlyphs" shape-rendering="auto">113.445</text>
<rect x="680" y="293" width="1" height="1" fill="#fff"/>
<rect x="680" y="304" width="1" height="1" fill="#fff"/>
<rect x="680" y="315" width="1" height="1" fill="#fff"/>
<rect x="680" y="333" width="1" height="1" fill="#fff"/>
<rect x="680" y="361" width="1" height="1" fill="#fff"/>
<rect x="680" y="390" width="1" height="1" fill="#fff"/>
<rect x="680" y="407" width="1" height="1" fill="#fff"/>
<rect x="680" y="418" width="1" height="1" fill="#fff"/>
<rect x="680" y="471" width="1" height="1" fill="#fff"/>
<text x="682.6" y="301.6" font-size="9.6" fill="#fff" stroke="#fff" stroke-width="0.1" textLength="15.02" lengthAdjust="spacingAndGlyphs">120</text>
<text x="682.6" y="307.6" font-size="9.6" fill="#fff" stroke="#fff" stroke-width="0.1" textLength="15.02" lengthAdjust="spacingAndGlyphs">100</text>
<text x="682.6" y="318.6" font-size="9.6" fill="#fff" stroke="#fff" stroke-width="0.1" textLength="10.01" lengthAdjust="spacingAndGlyphs">80</text>
<text x="682.6" y="336.6" font-size="9.6" fill="#fff" stroke="#fff" stroke-width="0.1" textLength="10.01" lengthAdjust="spacingAndGlyphs">50</text>
<text x="683.3" y="364.6" font-size="9.6" fill="#fff" stroke="#fff" stroke-width="0.1" textLength="17.52" lengthAdjust="spacingAndGlyphs">0.00</text>
<text x="682.6" y="393.6" font-size="9.6" fill="#fff" stroke="#fff" stroke-width="0.1" textLength="13.01" lengthAdjust="spacingAndGlyphs">-50</text>
<text x="682.6" y="410.6" font-size="9.6" fill="#fff" stroke="#fff" stroke-width="0.1" textLength="13.01" lengthAdjust="spacingAndGlyphs">-80</text>
<text x="682.6" y="415.9" font-size="9.6" fill="#fff" stroke="#fff" stroke-width="0.1" textLength="18.01" lengthAdjust="spacingAndGlyphs">-100</text>
<rect x="680" y="423" width="1" height="1" fill="#fff"/>
<rect x="680" y="552" width="1" height="1" fill="#fff"/>
<text x="683.2" y="431.7" font-size="9.6" fill="#fff" stroke="#fff" stroke-width="0.1" textLength="27.53" lengthAdjust="spacingAndGlyphs">0.1468</text>
<text x="683.2" y="474.6" font-size="9.6" fill="#fff" stroke="#fff" stroke-width="0.1" textLength="17.52" lengthAdjust="spacingAndGlyphs">0.00</text>
<text x="683.2" y="550.1" font-size="9.6" fill="#fff" stroke="#fff" stroke-width="0.1" textLength="30.52" lengthAdjust="spacingAndGlyphs">-0.2432</text>
<rect x="10" y="554" width="1" height="3" fill="#fff"/>
<text x="9.6" y="566" font-size="9.6" fill="#fff" stroke="#fff" stroke-width="0.1" textLength="49.54" lengthAdjust="spacingAndGlyphs">13 Jan 2022</text>
<rect x="74" y="554" width="1" height="3" fill="#fff"/>
<text x="73.6" y="566" font-size="9.6" fill="#fff" stroke="#fff" stroke-width="0.1" textLength="52.04" lengthAdjust="spacingAndGlyphs">13 Jan 17:00</text>
<rect x="138" y="554" width="1" height="3" fill="#fff"/>
<text x="137.6" y="566" font-size="9.6" fill="#fff" stroke="#fff" stroke-width="0.1" textLength="52.04" lengthAdjust="spacingAndGlyphs">14 Jan 01:00</text>
<rect x="202" y="554" width="1" height="3" fill="#fff"/>
<text x="201.6" y="566" font-size="9.6" fill="#fff" stroke="#fff" stroke-width="0.1" textLength="52.04" lengthAdjust="spacingAndGlyphs">14 Jan 09:00</text>
<rect x="266" y="554" width="1" height="3" fill="#fff"/>
<text x="265.6" y="566" font-size="9.6" fill="#fff" stroke="#fff" stroke-width="0.1" textLength="52.04" lengthAdjust="spacingAndGlyphs">14 Jan 17:00</text>
<rect x="330" y="554" width="1" height="3" fill="#fff"/>
<text x="329.6" y="566" font-size="9.6" fill="#fff" stroke="#fff" stroke-width="0.1" textLength="52.04" lengthAdjust="spacingAndGlyphs">17 Jan 01:00</text>
<rect x="394" y="554" width="1" height="3" fill="#fff"/>
<text x="393.6" y="566" font-size="9.6" fill="#fff" stroke="#fff" stroke-width="0.1" textLength="52.04" lengthAdjust="spacingAndGlyphs">17 Jan 09:00</text>
<rect x="458" y="554" width="1" height="3" fill="#fff"/>
<text x="457.6" y="566" font-size="9.6" fill="#fff" stroke="#fff" stroke-width="0.1" textLength="52.04" lengthAdjust="spacingAndGlyphs">17 Jan 17:00</text>
<rect x="522" y="554" width="1" height="3" fill="#fff"/>
<text x="521.6" y="566" font-size="9.6" fill="#fff" stroke="#fff" stroke-width="0.1" textLength="52.04" lengthAdjust="spacingAndGlyphs">18 Jan 01:00</text>
<rect x="586" y="554" width="1" height="3" fill="#fff"/>
<text x="585.6" y="566" font-size="9.6" fill="#fff" stroke="#fff" stroke-width="0.1" textLength="52.04" lengthAdjust="spacingAndGlyphs">18 Jan 09:00</text>
<rect x="650" y="554" width="1" height="3" fill="#fff"/>
<text x="649.6" y="566" font-size="9.6" fill="#fff" stroke="#fff" stroke-width="0.1" textLength="52.04" lengthAdjust="spacingAndGlyphs">18 Jan 17:00</text>
<path d="M13 42h8l-4 4.5z" fill="#fff" shape-rendering="auto"/>
<text x="25" y="47" font-size="9.6" fill="#fff" stroke="#fff" stroke-width="0.1" textLength="50" lengthAdjust="spacingAndGlyphs">USDJPY,H1</text>
<text x="83" y="47" font-size="9.6" fill="#fff" stroke="#fff" stroke-width="0.1" textLength="32.3" lengthAdjust="spacingAndGlyphs">134.229</text>
<text x="118.8" y="47" font-size="9.6" fill="#fff" stroke="#fff" stroke-width="0.1" textLength="32.3" lengthAdjust="spacingAndGlyphs">134.540</text>
<text x="154.5" y="47" font-size="9.6" fill="#fff" stroke="#fff" stroke-width="0.1" textLength="32.3" lengthAdjust="spacingAndGlyphs">134.212</text>
<text x="190.8" y="47" font-size="9.6" fill="#fff" stroke="#fff" stroke-width="0.1" textLength="32.3" lengthAdjust="spacingAndGlyphs">134.524</text>
<text x="14.6" y="304.2" font-size="9.6" fill="#fff" stroke="#fff" stroke-width="0.1" textLength="42.2" lengthAdjust="spacingAndGlyphs">R(9,26,52)</text>
<text x="59.7" y="304.2" font-size="9.6" fill="#fff" stroke="#fff" stroke-width="0.1" textLength="18" lengthAdjust="spacingAndGlyphs">90.0</text>
<text x="81.7" y="304.2" font-size="9.6" fill="#fff" stroke="#fff" stroke-width="0.1" textLength="18" lengthAdjust="spacingAndGlyphs">48.8</text>
<text x="102.4" y="304.2" font-size="9.6" fill="#fff" stroke="#fff" stroke-width="0.1" textLength="18" lengthAdjust="spacingAndGlyphs">59.7</text>
<text x="14.7" y="434.3" font-size="9.6" fill="#fff" stroke="#fff" stroke-width="0.1" textLength="65.6" lengthAdjust="spacingAndGlyphs">MACD(12,26,9)</text>
<text x="83.1" y="434.3" font-size="9.6" fill="#fff" stroke="#fff" stroke-width="0.1" textLength="27.2" lengthAdjust="spacingAndGlyphs">0.1125</text>
<text x="113.6" y="434.3" font-size="9.6" fill="#fff" stroke="#fff" stroke-width="0.1" textLength="27.7" lengthAdjust="spacingAndGlyphs">0.0754</text>
</svg>
</body></html>
